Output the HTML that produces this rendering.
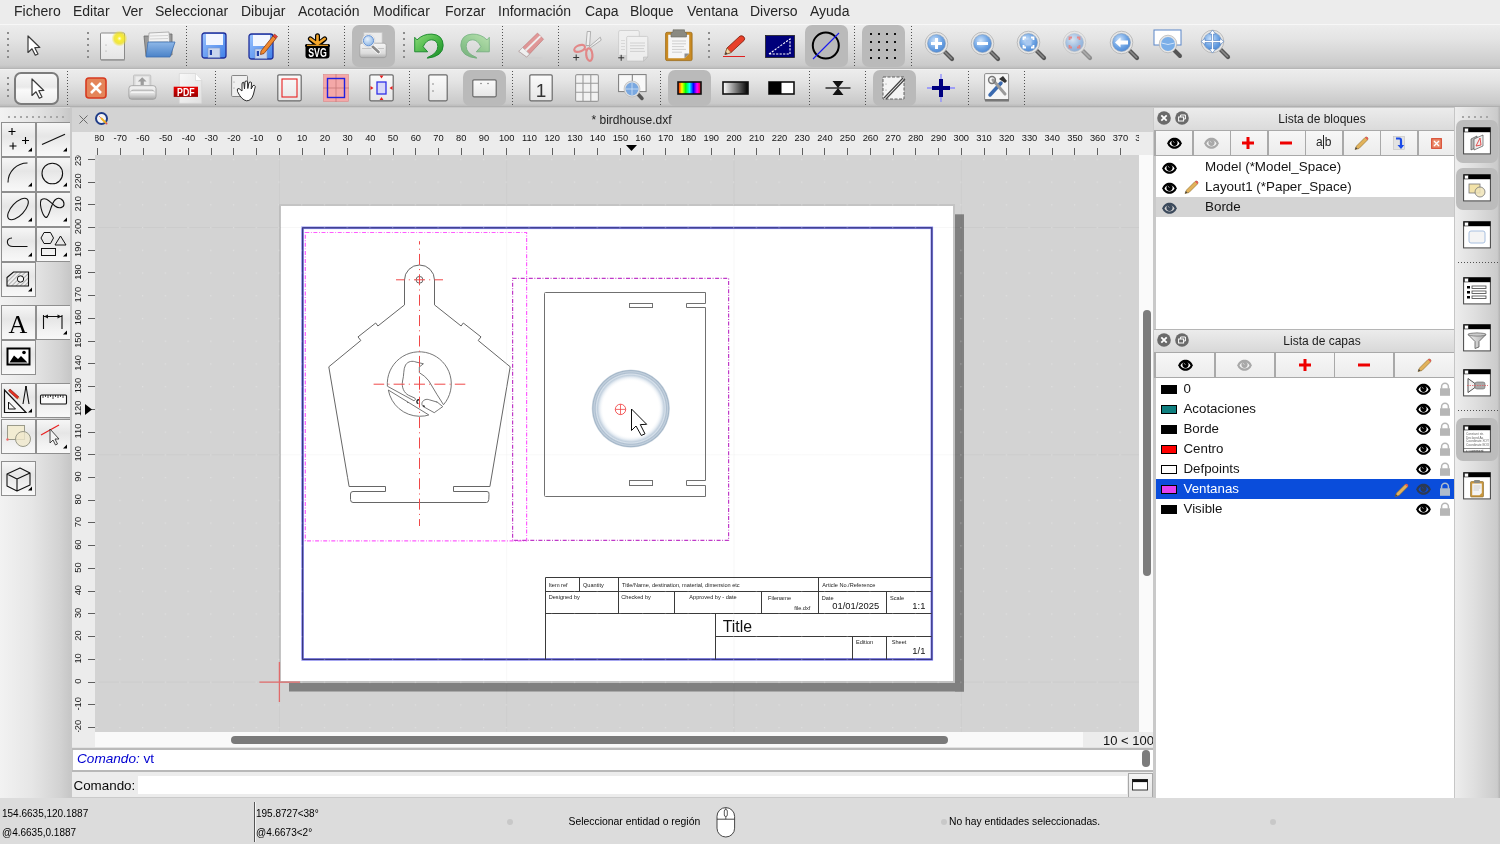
<!DOCTYPE html>
<html><head><meta charset="utf-8">
<style>
*{box-sizing:border-box;margin:0;padding:0}
html,body{width:1500px;height:844px;overflow:hidden;background:#ececec;font-family:"Liberation Sans",sans-serif;color:#262626}
body{will-change:transform}
.a{position:absolute}
#menu{left:0;top:0;width:1500px;height:24px;background:#ececec}
#menu span{position:absolute;top:3px;font-size:14px;line-height:17px;color:#262626}
.tb{left:0;width:1500px;background:linear-gradient(#ebebeb,#d5d5d5)}
.sep{position:absolute;width:1px;border-left:1px dotted #555}
.press{position:absolute;background:#c2c2c2;border-radius:6px}
svg{position:absolute;overflow:visible}
#left{left:0;top:107px;width:70px;height:691px;background:linear-gradient(90deg,#ececec 0%,#e2e2e2 50%,#c9c9c9 100%)}
.lb{position:absolute;width:35px;height:35px;border:1px solid #9b9b9b;background:linear-gradient(#fdfdfd,#e9e9e9 55%,#f3f3f3)}
#status{left:0;top:798px;width:1500px;height:46px;background:#dcdcdc}
#status span{position:absolute;font-size:10px;line-height:12px;color:#000}
.t{position:absolute;white-space:pre}
</style></head><body>
<div id="menu" class="a">
<span style="left:14px">Fichero</span>
<span style="left:73px">Editar</span>
<span style="left:122px">Ver</span>
<span style="left:155px">Seleccionar</span>
<span style="left:241px">Dibujar</span>
<span style="left:298px">Acotación</span>
<span style="left:373px">Modificar</span>
<span style="left:445px">Forzar</span>
<span style="left:498px">Información</span>
<span style="left:585px">Capa</span>
<span style="left:630px">Bloque</span>
<span style="left:687px">Ventana</span>
<span style="left:750px">Diverso</span>
<span style="left:810px">Ayuda</span>
</div>

<div class="a" style="left:0;top:24px;width:1500px;height:1px;background:#f7f7f7"></div>
<div class="a" style="left:0;top:25px;width:1500px;height:43px;background:linear-gradient(#ececec,#e5e5e5 30%,#cbcbcb 93%,#bebebe)"></div>
<div class="a" style="left:0;top:68px;width:1500px;height:1px;background:#b6b6b6"></div>
<div class="a" style="left:0;top:69px;width:1500px;height:1px;background:#f2f2f2"></div>
<div class="a" style="left:0;top:70px;width:1500px;height:36px;background:linear-gradient(#ececec,#e4e4e4 30%,#c9c9c9 93%,#bcbcbc)"></div>
<div class="a" style="left:0;top:106px;width:1500px;height:1px;background:#b0b0b0"></div>
<div class="a" style="left:7px;top:32px;width:2px;height:2px;background:#8c8c8c"></div>
<div class="a" style="left:7px;top:38px;width:2px;height:2px;background:#8c8c8c"></div>
<div class="a" style="left:7px;top:44px;width:2px;height:2px;background:#8c8c8c"></div>
<div class="a" style="left:7px;top:50px;width:2px;height:2px;background:#8c8c8c"></div>
<div class="a" style="left:7px;top:56px;width:2px;height:2px;background:#8c8c8c"></div>
<div class="a" style="left:87px;top:32px;width:2px;height:2px;background:#8c8c8c"></div>
<div class="a" style="left:87px;top:38px;width:2px;height:2px;background:#8c8c8c"></div>
<div class="a" style="left:87px;top:44px;width:2px;height:2px;background:#8c8c8c"></div>
<div class="a" style="left:87px;top:50px;width:2px;height:2px;background:#8c8c8c"></div>
<div class="a" style="left:87px;top:56px;width:2px;height:2px;background:#8c8c8c"></div>
<div class="a" style="left:403px;top:32px;width:2px;height:2px;background:#8c8c8c"></div>
<div class="a" style="left:403px;top:38px;width:2px;height:2px;background:#8c8c8c"></div>
<div class="a" style="left:403px;top:44px;width:2px;height:2px;background:#8c8c8c"></div>
<div class="a" style="left:403px;top:50px;width:2px;height:2px;background:#8c8c8c"></div>
<div class="a" style="left:403px;top:56px;width:2px;height:2px;background:#8c8c8c"></div>
<div class="a" style="left:708px;top:32px;width:2px;height:2px;background:#8c8c8c"></div>
<div class="a" style="left:708px;top:38px;width:2px;height:2px;background:#8c8c8c"></div>
<div class="a" style="left:708px;top:44px;width:2px;height:2px;background:#8c8c8c"></div>
<div class="a" style="left:708px;top:50px;width:2px;height:2px;background:#8c8c8c"></div>
<div class="a" style="left:708px;top:56px;width:2px;height:2px;background:#8c8c8c"></div>
<div class="a" style="left:186px;top:26px;width:1px;height:41px;background:repeating-linear-gradient(#505050 0 1px,transparent 1px 3px)"></div>
<div class="a" style="left:288px;top:26px;width:1px;height:41px;background:repeating-linear-gradient(#505050 0 1px,transparent 1px 3px)"></div>
<div class="a" style="left:344px;top:26px;width:1px;height:41px;background:repeating-linear-gradient(#505050 0 1px,transparent 1px 3px)"></div>
<div class="a" style="left:502px;top:26px;width:1px;height:41px;background:repeating-linear-gradient(#505050 0 1px,transparent 1px 3px)"></div>
<div class="a" style="left:558px;top:26px;width:1px;height:41px;background:repeating-linear-gradient(#505050 0 1px,transparent 1px 3px)"></div>
<div class="a" style="left:854px;top:26px;width:1px;height:41px;background:repeating-linear-gradient(#505050 0 1px,transparent 1px 3px)"></div>
<div class="a" style="left:911px;top:26px;width:1px;height:41px;background:repeating-linear-gradient(#505050 0 1px,transparent 1px 3px)"></div>
<div class="a" style="left:352px;top:25px;width:43px;height:42px;background:#bababa;border-radius:7px"></div>
<div class="a" style="left:805px;top:25px;width:43px;height:42px;background:#bababa;border-radius:7px"></div>
<div class="a" style="left:862px;top:25px;width:43px;height:42px;background:#bababa;border-radius:7px"></div>
<svg style="left:27px;top:35px" width="14" height="22" viewBox="0 0 14 22"><path d="M1 1 L1 17.5 L5 13.8 L8.3 20.2 L11 19 L7.8 12.7 L12.8 12.5 Z" fill="#fff" stroke="#3a3a3a" stroke-width="1.2" stroke-linejoin="round"/></svg>
<svg style="left:99px;top:31px" width="28" height="30" viewBox="0 0 28 30"><defs><linearGradient id="nd" x1="0" y1="0" x2="0" y2="1"><stop offset="0" stop-color="#fafafa"/><stop offset="1" stop-color="#e4e4e4"/></linearGradient><radialGradient id="ng"><stop offset="0" stop-color="#fffde0"/><stop offset="0.3" stop-color="#f8ee30"/><stop offset="0.65" stop-color="#eee020" stop-opacity="0.8"/><stop offset="1" stop-color="#eee020" stop-opacity="0"/></radialGradient></defs><rect x="1.5" y="2" width="24" height="27" rx="1" fill="url(#nd)" stroke="#8a8a8a" stroke-width="1"/><rect x="2" y="28" width="24" height="1.5" fill="#9a9a9a"/><circle cx="7" cy="14" r="0.5" fill="#888"/><circle cx="7" cy="20" r="0.5" fill="#888"/><circle cx="20.5" cy="7.5" r="8" fill="url(#ng)"/></svg>
<svg style="left:142px;top:31px" width="34" height="29" viewBox="0 0 34 29"><defs><linearGradient id="of" x1="0" y1="0" x2="0" y2="1"><stop offset="0" stop-color="#8fb8e8"/><stop offset="1" stop-color="#4a82c8"/></linearGradient></defs><path d="M2 5 L8 5 L9 3 L30 3 L30 24 L4 25 Z" fill="#9a9a9a" stroke="#6a6a6a" stroke-width="0.8"/><path d="M7 2 L27 1 L28 20 L6 21 Z" fill="#f4f4f4" stroke="#9a9a9a" stroke-width="0.7"/><path d="M8 5 L26 4.5 M8 8 L26 7.5 M8 11 L26 10.5" stroke="#bbb" stroke-width="0.6"/><path d="M6 11 L33 11 L28 26 L4 26 Z" fill="url(#of)" stroke="#3e6eb0" stroke-width="0.8"/></svg>
<svg style="left:201px;top:32px" width="27" height="28" viewBox="0 0 27 28"><defs><linearGradient id="sv" x1="0" y1="0" x2="1" y2="1"><stop offset="0" stop-color="#9cc4ff"/><stop offset="1" stop-color="#3f7fe8"/></linearGradient></defs><rect x="1" y="1" width="24" height="25" rx="2.5" fill="url(#sv)" stroke="#1f2f9a" stroke-width="1.3"/><rect x="5" y="2" width="17" height="11" fill="#f2f6ff"/><rect x="7" y="16" width="12" height="9.5" fill="#c9d6ee" stroke="#7f98c8" stroke-width="0.6"/><rect x="8.8" y="18" width="2.2" height="5" fill="#1f3fa8"/></svg>
<svg style="left:248px;top:31px" width="29" height="29" viewBox="0 0 29 29"><g transform="translate(0 2)"><defs><linearGradient id="sv2" x1="0" y1="0" x2="1" y2="1"><stop offset="0" stop-color="#9cc4ff"/><stop offset="1" stop-color="#3f7fe8"/></linearGradient></defs><rect x="1" y="1" width="24" height="25" rx="2.5" fill="url(#sv2)" stroke="#1f2f9a" stroke-width="1.3"/><rect x="5" y="2" width="17" height="11" fill="#f2f6ff"/><rect x="7" y="16" width="12" height="9.5" fill="#c9d6ee" stroke="#7f98c8" stroke-width="0.6"/><rect x="8.8" y="18" width="2.2" height="5" fill="#1f3fa8"/></g><path d="M13 20 L25 5 L28 7.5 L16 22.5 L12.5 23.5 Z" fill="#f08a30" stroke="#8a3a10" stroke-width="0.8"/><path d="M25 5 L26.5 3 L29.5 5.5 L28 7.5 Z" fill="#e84040" stroke="#8a3a10" stroke-width="0.6"/></svg>
<svg style="left:304px;top:33px" width="27" height="26" viewBox="0 0 27 26"><g stroke-linecap="round"><path d="M13.5 12 L13.5 2.8 M13.5 12 L6.3 5.8 M13.5 12 L20.7 5.8" stroke="#000" stroke-width="5"/><path d="M2.5 12.5 L24.5 12.5" stroke="#000" stroke-width="3"/><path d="M13.5 11 L13.5 2.8 M13.5 11 L6.3 5.8 M13.5 11 L20.7 5.8" stroke="#f4a62a" stroke-width="2.6"/></g><path d="M1.5 12 L25.5 12 L25.5 22.5 Q25.5 25.5 22.5 25.5 L4.5 25.5 Q1.5 25.5 1.5 22.5 Z" fill="#000"/><path d="M3 12.3 L24 12.3" stroke="#f4a62a" stroke-width="1.2"/><text x="13.5" y="23.8" font-family="Liberation Sans" font-weight="bold" font-size="12" fill="#fff" text-anchor="middle" textLength="18.5" lengthAdjust="spacingAndGlyphs">SVG</text></svg>
<svg style="left:359px;top:32px" width="29" height="28" viewBox="0 0 29 28"><defs><linearGradient id="pp" x1="0" y1="0" x2="0" y2="1"><stop offset="0" stop-color="#f6f6f6"/><stop offset="0.7" stop-color="#dcdcdc"/><stop offset="1" stop-color="#b0b0b0"/></linearGradient><radialGradient id="ppl" cx="0.4" cy="0.35" r="0.7"><stop offset="0" stop-color="#e8f2fc"/><stop offset="1" stop-color="#8ab4e4"/></radialGradient></defs><rect x="4.9" y="0.6" width="18.2" height="12.3" fill="#ececec" stroke="#c8c8c8" stroke-width="0.7"/><path d="M0.8 13.5 Q0.8 11.2 3 11.2 L25 11.2 Q27.2 11.2 27.2 13.5 L27.2 23.5 Q27.2 25.6 25 25.6 L3 25.6 Q0.8 25.6 0.8 23.5 Z" fill="url(#pp)" stroke="#9a9a9a" stroke-width="0.7"/><path d="M3 16.5 L25 16.5" stroke="#bbb" stroke-width="0.8"/><path d="M13.5 14.5 L19.5 20" stroke="#fff" stroke-width="4.2" stroke-linecap="round"/><path d="M13.5 14.5 L19.5 20" stroke="#8a8a8a" stroke-width="2.6" stroke-linecap="round"/><circle cx="9.5" cy="8.7" r="6.4" fill="#fafafa" stroke="#c8c8c8" stroke-width="0.6"/><circle cx="9.5" cy="8.7" r="5.1" fill="url(#ppl)" stroke="#5a8ad0" stroke-width="0.9"/></svg>
<svg style="left:414px;top:33px" width="30" height="27" viewBox="0 0 30 27"><defs><linearGradient id="ug" x1="0" y1="0" x2="1" y2="1"><stop offset="0" stop-color="#8edc7a"/><stop offset="0.6" stop-color="#3fb040"/><stop offset="1" stop-color="#1a8a28"/></linearGradient></defs><path d="M0.7 4.3 L3 6.9 Q9 0.8 17.9 1.1 Q29 1.8 29.2 12.5 Q29 23.5 13.3 25.2 L13.6 24.4 Q23.6 20.5 23.8 13.5 Q23.6 6.8 17.2 6.8 Q12.3 7 9.1 13.7 L13.7 18.8 L0.7 18.8 Z" fill="url(#ug)" stroke="#16862a" stroke-width="0.9" stroke-linejoin="round"/></svg>
<svg style="left:460px;top:33px" width="30" height="27" viewBox="0 0 30 27"><g opacity="0.5" transform="translate(30 0) scale(-1 1)"><defs><linearGradient id="rg" x1="0" y1="0" x2="1" y2="1"><stop offset="0" stop-color="#8edc7a"/><stop offset="0.6" stop-color="#3fb040"/><stop offset="1" stop-color="#1a8a28"/></linearGradient></defs><path d="M0.7 4.3 L3 6.9 Q9 0.8 17.9 1.1 Q29 1.8 29.2 12.5 Q29 23.5 13.3 25.2 L13.6 24.4 Q23.6 20.5 23.8 13.5 Q23.6 6.8 17.2 6.8 Q12.3 7 9.1 13.7 L13.7 18.8 L0.7 18.8 Z" fill="url(#rg)" stroke="#16862a" stroke-width="0.9" stroke-linejoin="round"/></g></svg>
<svg style="left:517px;top:32px" width="28" height="28" viewBox="0 0 28 28"><g opacity="0.7"><ellipse cx="16" cy="26" rx="10" ry="1.3" fill="#cfcfcf"/><path d="M1.8 19.3 L20.5 1.1 L26.5 7.2 L9.7 25 Z" fill="#e07878" stroke="#b05050" stroke-width="0.7"/><path d="M1.8 19.3 L5.6 15.6 L12.6 22 L9.7 25 Z" fill="#fafafa" stroke="#999" stroke-width="0.7"/><path d="M8.5 18.8 L23.4 4.1" stroke="#f4f4f4" stroke-width="2"/></g></svg>
<svg style="left:572px;top:31px" width="30" height="30" viewBox="0 0 30 30"><g opacity="0.85"><path d="M14 14.5 L15.2 0.5 L18.6 0.5 L17.6 14.5 Z" fill="#f2f2f2" stroke="#8a8a8a" stroke-width="0.7"/><path d="M17.2 15.8 L28.3 6.2 L29.2 9.2 L18.6 16.6 Z" fill="#f2f2f2" stroke="#8a8a8a" stroke-width="0.7"/><ellipse cx="7.6" cy="17.4" rx="5.6" ry="3.1" transform="rotate(-22 7.6 17.4)" fill="none" stroke="#e47a7a" stroke-width="2.2"/><ellipse cx="17.3" cy="23.6" rx="3.1" ry="6.3" transform="rotate(-6 17.3 23.6)" fill="none" stroke="#e47a7a" stroke-width="2.2"/><path d="M12.5 18.5 L15.5 19" stroke="#e47a7a" stroke-width="2"/></g><path d="M1.2 26.5 L7.2 26.5 M4.2 23.5 L4.2 29.5" stroke="#333" stroke-width="1"/></svg>
<svg style="left:617px;top:30px" width="32" height="32" viewBox="0 0 32 32"><g opacity="0.8"><rect x="1.6" y="0.5" width="20.7" height="25.2" rx="1.5" fill="#f2f2f2" stroke="#c4c4c4" stroke-width="0.8"/><path d="M4 10.5 L8 10.5 M4 13.5 L8 13.5 M4 16.5 L8 16.5 M4 19.5 L8 19.5" stroke="#cfcfcf" stroke-width="0.8"/><path d="M11.2 6.4 L29.8 6.4 Q30.8 6.4 30.8 7.4 L30.8 27 L26.5 31.1 L10.7 31.1 Q9.7 31.1 9.7 30.1 L9.7 7.4 Q9.7 6.4 11.2 6.4 Z" fill="#f4f4f4" stroke="#c0c0c0" stroke-width="0.8"/><path d="M13 13 L28 13 M13 15.8 L28 15.8 M13 18.6 L27 18.6 M13 21.4 L28 21.4" stroke="#c8c8c8" stroke-width="0.9"/><path d="M26.5 31.1 L26.5 27 L30.8 27 Z" fill="#d8d8d8" stroke="#aaa" stroke-width="0.5"/></g><path d="M1.2 27.8 L7.2 27.8 M4.2 24.8 L4.2 30.8" stroke="#333" stroke-width="1"/></svg>
<svg style="left:665px;top:29px" width="28" height="32" viewBox="0 0 28 32"><rect x="0.6" y="3.3" width="26.5" height="28.3" rx="1.5" fill="#c98a22" stroke="#9a6a18" stroke-width="0.8"/><path d="M3.2 5.8 L24.2 5.8 L24.2 24.5 L19.5 29.2 L3.2 29.2 Z" fill="#f6f6f6"/><path d="M19.5 29.2 L24.2 24.5 L19.5 24.5 Z" fill="#8e8e8e"/><path d="M8 0.8 L19.5 0.8 L19.5 3 L21.5 4 L21.5 8 L6 8 L6 4 L8 3 Z" fill="#8a8a82" stroke="#6a6a62" stroke-width="0.6"/><path d="M7 12 L21 12 M7 14.8 L21 14.8 M7 17.6 L19 17.6 M7 20.4 L21 20.4 M7 23.2 L17 23.2" stroke="#c4c4c4" stroke-width="0.8"/></svg>
<svg style="left:722px;top:34px" width="24" height="24" viewBox="0 0 24 24"><path d="M1 22.5 L23 22.5" stroke="#e02020" stroke-width="1"/><path d="M3 20.5 L5 14 L18 2 Q20 1 22 3 Q23.5 5 22 6.5 L9 18.5 Z" fill="#e8402a" stroke="#7a1a0a" stroke-width="0.8"/><path d="M3 20.5 L5 14 L9 18.5 Z" fill="#f4d8a8" stroke="#7a5a2a" stroke-width="0.6"/><path d="M3 20.5 L3.8 18 L5.5 19.5Z" fill="#333"/></svg>
<svg style="left:765px;top:35px" width="30" height="23" viewBox="0 0 30 23"><rect x="0.5" y="0.5" width="29" height="22" fill="#00007a" stroke="#222" stroke-width="0.8"/><path d="M4 19 L25 4 L25 19 Z" fill="none" stroke="#fff" stroke-width="1.1" stroke-dasharray="2.2 1.3"/></svg>
<svg style="left:811px;top:31px" width="30" height="30" viewBox="0 0 30 30"><circle cx="14.8" cy="14.6" r="13" fill="none" stroke="#000" stroke-width="2"/><path d="M2 28 L28 2" stroke="#1818f0" stroke-width="1.1"/></svg>
<svg style="left:870px;top:33px" width="26" height="26" viewBox="0 0 26 26"><rect x="0" y="0" width="2" height="2" fill="#111"/><rect x="0" y="8" width="2" height="2" fill="#111"/><rect x="0" y="16" width="2" height="2" fill="#111"/><rect x="0" y="24" width="2" height="2" fill="#111"/><rect x="8" y="0" width="2" height="2" fill="#111"/><rect x="8" y="8" width="2" height="2" fill="#111"/><rect x="8" y="16" width="2" height="2" fill="#111"/><rect x="8" y="24" width="2" height="2" fill="#111"/><rect x="16" y="0" width="2" height="2" fill="#111"/><rect x="16" y="8" width="2" height="2" fill="#111"/><rect x="16" y="16" width="2" height="2" fill="#111"/><rect x="16" y="24" width="2" height="2" fill="#111"/><rect x="24" y="0" width="2" height="2" fill="#111"/><rect x="24" y="8" width="2" height="2" fill="#111"/><rect x="24" y="16" width="2" height="2" fill="#111"/><rect x="24" y="24" width="2" height="2" fill="#111"/></svg>
<svg style="left:924px;top:31px" width="32" height="31" viewBox="0 0 32 31"><defs><radialGradient id="mgl924" cx="0.4" cy="0.35" r="0.7"><stop offset="0" stop-color="#cfe4fb"/><stop offset="0.6" stop-color="#6ea4e4"/><stop offset="1" stop-color="#4b86d2"/></radialGradient></defs><g><path d="M20 20 L28 28" stroke="#555" stroke-width="4.2" stroke-linecap="round"/><path d="M21 21 L27.5 27.5" stroke="#8a8a8a" stroke-width="1.6" stroke-linecap="round"/><circle cx="12.5" cy="12.5" r="11.3" fill="#e6e6e6" stroke="#b0b0b0" stroke-width="0.8"/><circle cx="12.5" cy="12.5" r="9" fill="url(#mgl924)" stroke="#8aa0b8" stroke-width="0.6"/><path d="M7 12.5 L18 12.5 M12.5 7 L12.5 18" stroke="#fff" stroke-width="3"/></g></svg>
<svg style="left:970px;top:31px" width="32" height="31" viewBox="0 0 32 31"><defs><radialGradient id="mgl970" cx="0.4" cy="0.35" r="0.7"><stop offset="0" stop-color="#cfe4fb"/><stop offset="0.6" stop-color="#6ea4e4"/><stop offset="1" stop-color="#4b86d2"/></radialGradient></defs><g><path d="M20 20 L28 28" stroke="#555" stroke-width="4.2" stroke-linecap="round"/><path d="M21 21 L27.5 27.5" stroke="#8a8a8a" stroke-width="1.6" stroke-linecap="round"/><circle cx="12.5" cy="12.5" r="11.3" fill="#e6e6e6" stroke="#b0b0b0" stroke-width="0.8"/><circle cx="12.5" cy="12.5" r="9" fill="url(#mgl970)" stroke="#8aa0b8" stroke-width="0.6"/><path d="M7 12.5 L18 12.5" stroke="#fff" stroke-width="3"/></g></svg>
<svg style="left:1016px;top:30px" width="32" height="31" viewBox="0 0 32 31"><defs><radialGradient id="mgl1016" cx="0.4" cy="0.35" r="0.7"><stop offset="0" stop-color="#cfe4fb"/><stop offset="0.6" stop-color="#6ea4e4"/><stop offset="1" stop-color="#4b86d2"/></radialGradient></defs><g><path d="M20 20 L28 28" stroke="#555" stroke-width="4.2" stroke-linecap="round"/><path d="M21 21 L27.5 27.5" stroke="#8a8a8a" stroke-width="1.6" stroke-linecap="round"/><circle cx="12.5" cy="12.5" r="11.3" fill="#e6e6e6" stroke="#b0b0b0" stroke-width="0.8"/><circle cx="12.5" cy="12.5" r="9" fill="url(#mgl1016)" stroke="#8aa0b8" stroke-width="0.6"/><path d="M7.5 10 L7.5 7.5 L10 7.5 M15 7.5 L17.5 7.5 L17.5 10 M17.5 15 L17.5 17.5 L15 17.5 M10 17.5 L7.5 17.5 L7.5 15" fill="none" stroke="#fff" stroke-width="1.8"/><rect x="9.5" y="9.5" width="6" height="6" fill="#a8c8f0"/></g></svg>
<svg style="left:1062px;top:30px" width="32" height="31" viewBox="0 0 32 31"><defs><radialGradient id="mgl1062" cx="0.4" cy="0.35" r="0.7"><stop offset="0" stop-color="#cfe4fb"/><stop offset="0.6" stop-color="#6ea4e4"/><stop offset="1" stop-color="#4b86d2"/></radialGradient></defs><g opacity="0.55"><path d="M20 20 L28 28" stroke="#555" stroke-width="4.2" stroke-linecap="round"/><path d="M21 21 L27.5 27.5" stroke="#8a8a8a" stroke-width="1.6" stroke-linecap="round"/><circle cx="12.5" cy="12.5" r="11.3" fill="#e6e6e6" stroke="#b0b0b0" stroke-width="0.8"/><circle cx="12.5" cy="12.5" r="9" fill="url(#mgl1062)" stroke="#8aa0b8" stroke-width="0.6"/><path d="M7.5 10 L7.5 7.5 L10 7.5 M15 7.5 L17.5 7.5 L17.5 10 M17.5 15 L17.5 17.5 L15 17.5 M10 17.5 L7.5 17.5 L7.5 15" fill="none" stroke="#e84040" stroke-width="1.8"/></g></svg>
<svg style="left:1109px;top:30px" width="32" height="31" viewBox="0 0 32 31"><defs><radialGradient id="mgl1109" cx="0.4" cy="0.35" r="0.7"><stop offset="0" stop-color="#cfe4fb"/><stop offset="0.6" stop-color="#6ea4e4"/><stop offset="1" stop-color="#4b86d2"/></radialGradient></defs><g><path d="M20 20 L28 28" stroke="#555" stroke-width="4.2" stroke-linecap="round"/><path d="M21 21 L27.5 27.5" stroke="#8a8a8a" stroke-width="1.6" stroke-linecap="round"/><circle cx="12.5" cy="12.5" r="11.3" fill="#e6e6e6" stroke="#b0b0b0" stroke-width="0.8"/><circle cx="12.5" cy="12.5" r="9" fill="url(#mgl1109)" stroke="#8aa0b8" stroke-width="0.6"/><path d="M6 12.5 L11.5 7.5 L11.5 10.5 L19 10.5 L19 14.5 L11.5 14.5 L11.5 17.5 Z" fill="#fff"/></g></svg>
<svg style="left:1153px;top:29px" width="31" height="31" viewBox="0 0 31 31"><rect x="1" y="1" width="27" height="15" fill="#fff" stroke="#5a86c8" stroke-width="1"/><path d="M20 20 L27 27" stroke="#555" stroke-width="4" stroke-linecap="round"/><circle cx="15" cy="15" r="8.8" fill="#e6e6e6" stroke="#b0b0b0" stroke-width="0.7"/><circle cx="15" cy="15" r="7" fill="#7aaee8"/><path d="M8.5 14 Q15 17 21.5 14" stroke="#cfe3fa" stroke-width="1" fill="none"/></svg>
<svg style="left:1200px;top:29px" width="32" height="32" viewBox="0 0 32 32"><defs><radialGradient id="mgl1200" cx="0.4" cy="0.35" r="0.7"><stop offset="0" stop-color="#cfe4fb"/><stop offset="0.6" stop-color="#6ea4e4"/><stop offset="1" stop-color="#4b86d2"/></radialGradient></defs><g><path d="M20 20 L28 28" stroke="#555" stroke-width="4.2" stroke-linecap="round"/><path d="M21 21 L27.5 27.5" stroke="#8a8a8a" stroke-width="1.6" stroke-linecap="round"/><circle cx="12.5" cy="12.5" r="11.3" fill="#e6e6e6" stroke="#b0b0b0" stroke-width="0.8"/><circle cx="12.5" cy="12.5" r="9" fill="url(#mgl1200)" stroke="#8aa0b8" stroke-width="0.6"/><path d="M12.5 1 L15.5 5 L13.5 5 L13.5 11.5 L20 11.5 L20 9.5 L24 12.5 L20 15.5 L20 13.5 L13.5 13.5 L13.5 20 L15.5 20 L12.5 24 L9.5 20 L11.5 20 L11.5 13.5 L5 13.5 L5 15.5 L1 12.5 L5 9.5 L5 11.5 L11.5 11.5 L11.5 5 L9.5 5 Z" fill="#fff" stroke="#4a7ac0" stroke-width="0.6"/></g></svg>
<div class="a" style="left:7px;top:77px;width:2px;height:2px;background:#8c8c8c"></div>
<div class="a" style="left:7px;top:83px;width:2px;height:2px;background:#8c8c8c"></div>
<div class="a" style="left:7px;top:89px;width:2px;height:2px;background:#8c8c8c"></div>
<div class="a" style="left:7px;top:95px;width:2px;height:2px;background:#8c8c8c"></div>
<div class="a" style="left:67px;top:71px;width:1px;height:35px;background:repeating-linear-gradient(#505050 0 1px,transparent 1px 3px)"></div>
<div class="a" style="left:215px;top:71px;width:1px;height:35px;background:repeating-linear-gradient(#505050 0 1px,transparent 1px 3px)"></div>
<div class="a" style="left:409px;top:71px;width:1px;height:35px;background:repeating-linear-gradient(#505050 0 1px,transparent 1px 3px)"></div>
<div class="a" style="left:512px;top:71px;width:1px;height:35px;background:repeating-linear-gradient(#505050 0 1px,transparent 1px 3px)"></div>
<div class="a" style="left:660px;top:71px;width:1px;height:35px;background:repeating-linear-gradient(#505050 0 1px,transparent 1px 3px)"></div>
<div class="a" style="left:809px;top:71px;width:1px;height:35px;background:repeating-linear-gradient(#505050 0 1px,transparent 1px 3px)"></div>
<div class="a" style="left:865px;top:71px;width:1px;height:35px;background:repeating-linear-gradient(#505050 0 1px,transparent 1px 3px)"></div>
<div class="a" style="left:968px;top:71px;width:1px;height:35px;background:repeating-linear-gradient(#505050 0 1px,transparent 1px 3px)"></div>
<div class="a" style="left:1024px;top:71px;width:1px;height:35px;background:repeating-linear-gradient(#505050 0 1px,transparent 1px 3px)"></div>
<div class="a" style="left:463px;top:70px;width:43px;height:36px;background:#bababa;border-radius:7px"></div>
<div class="a" style="left:668px;top:70px;width:43px;height:36px;background:#bababa;border-radius:7px"></div>
<div class="a" style="left:873px;top:70px;width:43px;height:36px;background:#bababa;border-radius:7px"></div>
<div class="a" style="left:14px;top:72px;width:45px;height:33px;border:2px solid #7c7c7c;border-radius:7px;background:linear-gradient(#f7f7f7,#e9e9e9 45%,#fafafa 55%,#ececec)"></div>
<svg style="left:31px;top:78px" width="14" height="22" viewBox="0 0 14 22"><path d="M1 1 L1 17.5 L5 13.8 L8.3 20.2 L11 19 L7.8 12.7 L12.8 12.5 Z" fill="#fff" stroke="#3a3a3a" stroke-width="1.2" stroke-linejoin="round"/></svg>
<svg style="left:85px;top:77px" width="22" height="22" viewBox="0 0 22 22"><rect x="1" y="1" width="20" height="20" rx="3" fill="#e4855a" stroke="#d63a20" stroke-width="1.6"/><path d="M6 6 L16 16 M16 6 L6 16" stroke="#fff" stroke-width="2.6"/></svg>
<svg style="left:128px;top:74px" width="29" height="27" viewBox="0 0 29 27"><defs><linearGradient id="pr" x1="0" y1="0" x2="0" y2="1"><stop offset="0" stop-color="#f4f4f4"/><stop offset="0.6" stop-color="#dedede"/><stop offset="1" stop-color="#a8a8a8"/></linearGradient></defs><rect x="5.5" y="1" width="17.3" height="12.5" rx="1" fill="#d8d8d8" stroke="#bdbdbd" stroke-width="0.8"/><rect x="7.5" y="2.5" width="13.3" height="9" fill="#ececec"/><path d="M14.2 3.2 L18.6 7.6 L15.8 7.6 L15.8 11 L12.6 11 L12.6 7.6 L9.8 7.6 Z" fill="#9c9c9c"/><path d="M0.9 14.5 Q0.9 11.7 3.7 11.7 L25.2 11.7 Q28 11.7 28 14.5 L28 22.5 Q28 25.3 25.2 25.3 L3.7 25.3 Q0.9 25.3 0.9 22.5 Z" fill="url(#pr)" stroke="#9a9a9a" stroke-width="0.8"/><path d="M2.8 17.5 Q3.5 16.2 5 16.2 L24 16.2 Q25.5 16.2 26 17.5" fill="none" stroke="#9a9a9a" stroke-width="0.8"/><path d="M3 18.3 L26 18.3" stroke="#fff" stroke-width="0.8"/></svg>
<svg style="left:173px;top:73px" width="30" height="31" viewBox="0 0 30 31"><defs><linearGradient id="pdfg" x1="0" y1="0" x2="0" y2="1"><stop offset="0" stop-color="#e80000"/><stop offset="1" stop-color="#980000"/></linearGradient><linearGradient id="pdfd" x1="0" y1="0" x2="1" y2="1"><stop offset="0" stop-color="#f8f8f8"/><stop offset="1" stop-color="#e0e0e0"/></linearGradient></defs><path d="M6.3 0.5 L22.5 0.5 L28.7 7.5 L28.7 30.3 L6.3 30.3 Z" fill="url(#pdfd)" stroke="#d4d4d4" stroke-width="0.7"/><path d="M22.5 0.5 L22.5 7.5 L28.7 7.5" fill="#fff" stroke="#d0d0d0" stroke-width="0.6"/><rect x="0.7" y="13.7" width="24.3" height="10.2" fill="url(#pdfg)"/><text x="12.8" y="22.7" font-family="Liberation Sans" font-weight="bold" font-size="10.6" fill="#fff" text-anchor="middle" textLength="17.5" lengthAdjust="spacingAndGlyphs">PDF</text></svg>
<svg style="left:230px;top:74px" width="28" height="28" viewBox="0 0 28 28"><rect x="1.6" y="1.5" width="15.9" height="21" rx="1" fill="#efefef" stroke="#7a7a7a" stroke-width="0.9"/><circle cx="4" cy="8" r="0.5" fill="#777"/><circle cx="4" cy="14" r="0.5" fill="#777"/><path d="M7.5 17.5 Q6.5 14 9 14.5 L12 17 L12 10 Q12 8 13.8 8.3 L14.5 15 L15 7.5 Q16.2 6.5 17.5 7.5 L17.8 14.5 L19 8.5 Q20.3 7.5 21.5 8.5 L21.2 15 L23 11.5 Q24.8 10.8 25.3 12.5 L23.5 20 Q21.5 27 16.5 26.8 Q11.5 26 7.5 17.5 Z" fill="#fff" stroke="#2a2a2a" stroke-width="1"/></svg>
<svg style="left:277px;top:74px" width="25" height="28" viewBox="0 0 25 28"><defs><linearGradient id="pg277" x1="0" y1="0" x2="0" y2="1"><stop offset="0" stop-color="#fbfbfb"/><stop offset="1" stop-color="#e6e6e6"/></linearGradient></defs><rect x="0.8" y="0.8" width="23.4" height="26" rx="1.2" fill="url(#pg277)" stroke="#6a6a6a" stroke-width="1.2"/><rect x="5" y="5" width="15" height="18" fill="none" stroke="#e82020" stroke-width="1.1"/></svg>
<svg style="left:323px;top:74px" width="26" height="28" viewBox="0 0 26 28"><rect x="0.5" y="0.5" width="25" height="27" fill="#f4a8a8" stroke="#d88" stroke-width="0.6"/><path d="M13 0 L13 28 M0 14 L26 14" stroke="#c87878" stroke-width="0.8"/><rect x="4.5" y="4.5" width="17" height="19" fill="none" stroke="#2020e0" stroke-width="1.4"/></svg>
<svg style="left:369px;top:74px" width="25" height="28" viewBox="0 0 25 28"><defs><linearGradient id="pg369" x1="0" y1="0" x2="0" y2="1"><stop offset="0" stop-color="#fbfbfb"/><stop offset="1" stop-color="#e6e6e6"/></linearGradient></defs><rect x="0.8" y="0.8" width="23.4" height="26" rx="1.2" fill="url(#pg369)" stroke="#6a6a6a" stroke-width="1.2"/><rect x="8" y="8" width="9" height="12" fill="#d8d8f8" stroke="#3030e8" stroke-width="1.3"/><path d="M10.5 1.5 L14.5 1.5 L12.5 4.5Z M10.5 26 L14.5 26 L12.5 23Z M1.5 12 L1.5 16 L4.5 14Z M23.5 12 L23.5 16 L20.5 14Z" fill="#e82020"/></svg>
<svg style="left:428px;top:74px" width="20" height="28" viewBox="0 0 20 28"><defs><linearGradient id="pg428" x1="0" y1="0" x2="0" y2="1"><stop offset="0" stop-color="#fbfbfb"/><stop offset="1" stop-color="#e6e6e6"/></linearGradient></defs><rect x="0.8" y="0.8" width="18.4" height="26" rx="1.2" fill="url(#pg428)" stroke="#6a6a6a" stroke-width="1.2"/><circle cx="5" cy="10" r="0.7" fill="#666"/><circle cx="5" cy="17" r="0.7" fill="#666"/></svg>
<svg style="left:472px;top:79px" width="25" height="19" viewBox="0 0 25 19"><defs><linearGradient id="pg472" x1="0" y1="0" x2="0" y2="1"><stop offset="0" stop-color="#fbfbfb"/><stop offset="1" stop-color="#e6e6e6"/></linearGradient></defs><rect x="0.8" y="0.8" width="23.4" height="17" rx="1.2" fill="url(#pg472)" stroke="#6a6a6a" stroke-width="1.2"/><circle cx="9" cy="4.5" r="0.7" fill="#666"/><circle cx="16" cy="4.5" r="0.7" fill="#666"/></svg>
<svg style="left:529px;top:74px" width="24" height="28" viewBox="0 0 24 28"><defs><linearGradient id="pg529" x1="0" y1="0" x2="0" y2="1"><stop offset="0" stop-color="#fbfbfb"/><stop offset="1" stop-color="#e6e6e6"/></linearGradient></defs><rect x="0.8" y="0.8" width="22.4" height="26" rx="1.2" fill="url(#pg529)" stroke="#6a6a6a" stroke-width="1.2"/><text x="12" y="22.5" font-family="Liberation Sans" font-size="19" fill="#333" text-anchor="middle">1</text></svg>
<svg style="left:575px;top:74px" width="24" height="28" viewBox="0 0 24 28"><rect x="0.6" y="0.6" width="22.8" height="26.8" rx="1.5" fill="#f2f2f2" stroke="#9a9a9a" stroke-width="1.1"/><path d="M8 0 L8 28 M15.8 0 L15.8 28 M0 9.3 L24 9.3 M0 18.3 L24 18.3" stroke="#9a9a9a" stroke-width="1.1"/></svg>
<svg style="left:618px;top:74px" width="30" height="28" viewBox="0 0 30 28"><rect x="0.6" y="0.6" width="27.5" height="17" fill="#f8f8f8" stroke="#7a7a7a" stroke-width="1"/><path d="M14.3 0.6 L14.3 17.6" stroke="#7a7a7a" stroke-width="1"/><path d="M18 18 L24 24.5" stroke="#555" stroke-width="3.5" stroke-linecap="round"/><circle cx="14" cy="15" r="8" fill="#e0e0e0" stroke="#b0b0b0" stroke-width="0.6"/><circle cx="14" cy="15" r="6.5" fill="#7aa8e0"/><path d="M8 15 L20 15 M14 9 L14 21" stroke="#cfe2f8" stroke-width="0.8"/></svg>
<svg style="left:677px;top:81px" width="25" height="14" viewBox="0 0 25 14"><defs><linearGradient id="rb"><stop offset="0" stop-color="#ff0000"/><stop offset="0.17" stop-color="#ffff00"/><stop offset="0.33" stop-color="#00ff00"/><stop offset="0.5" stop-color="#00ffff"/><stop offset="0.67" stop-color="#0000ff"/><stop offset="0.83" stop-color="#ff00ff"/><stop offset="1" stop-color="#ff0000"/></linearGradient></defs><rect x="1" y="1" width="23" height="12" fill="url(#rb)" stroke="#111" stroke-width="1.6"/></svg>
<svg style="left:722px;top:81px" width="27" height="14" viewBox="0 0 27 14"><defs><linearGradient id="gg"><stop offset="0" stop-color="#fff"/><stop offset="1" stop-color="#000"/></linearGradient></defs><rect x="1" y="1" width="25" height="12" fill="url(#gg)" stroke="#111" stroke-width="1.6"/></svg>
<svg style="left:768px;top:81px" width="27" height="14" viewBox="0 0 27 14"><rect x="1" y="1" width="25" height="12" fill="#fff" stroke="#111" stroke-width="1.6"/><rect x="1" y="1" width="12.5" height="12" fill="#000"/></svg>
<svg style="left:825px;top:80px" width="26" height="16" viewBox="0 0 26 16"><path d="M0.5 8 L25.5 8" stroke="#111" stroke-width="1.3"/><path d="M7.5 1 L18.5 1 L13 8 L18.5 15 L7.5 15 L13 8 Z" fill="#111"/></svg>
<svg style="left:882px;top:76px" width="24" height="24" viewBox="0 0 24 24"><rect x="1" y="1" width="21" height="22" fill="#f4f4f4" stroke="#555" stroke-width="0.9" stroke-dasharray="3 1.5"/><path d="M2 22 L21 2 M4 23 L23 3" stroke="#444" stroke-width="1.2"/><circle cx="4" cy="8" r="0.5" fill="#777"/><circle cx="4" cy="14" r="0.5" fill="#777"/></svg>
<svg style="left:927px;top:74px" width="28" height="28" viewBox="0 0 28 28"><path d="M0 14 L28 14 M14 0 L14 28" stroke="#8a8aff" stroke-width="1.3"/><path d="M5 14 L23 14 M14 5 L14 23" stroke="#000080" stroke-width="4"/></svg>
<svg style="left:984px;top:73px" width="26" height="29" viewBox="0 0 26 29"><rect x="0.6" y="0.6" width="24" height="27" rx="1.2" fill="#f6f6f6" stroke="#8a8a8a" stroke-width="1"/><rect x="1" y="26" width="24" height="2.5" fill="#777"/><path d="M6 22 L17 10" stroke="#3a6ab0" stroke-width="3.5" stroke-linecap="round"/><path d="M9 7 L21 21" stroke="#9a9a9a" stroke-width="3" stroke-linecap="round"/><circle cx="8" cy="7" r="3.4" fill="none" stroke="#777" stroke-width="1.5"/><path d="M15 6 L19 3 L23 8 L21 10 Z" fill="#333"/></svg>
<div class="a" style="left:0;top:107px;width:71px;height:691px;background:linear-gradient(90deg,#f2f2f2 0%,#e6e6e6 45%,#d2d2d2 85%,#c6c6c6 100%)"></div>
<div class="a" style="left:0;top:107px;width:71px;height:1px;background:#d8d8d8"></div>
<div class="a" style="left:8px;top:116px;width:2px;height:2px;background:#a6a6a6"></div>
<div class="a" style="left:14px;top:116px;width:2px;height:2px;background:#a6a6a6"></div>
<div class="a" style="left:20px;top:116px;width:2px;height:2px;background:#a6a6a6"></div>
<div class="a" style="left:26px;top:116px;width:2px;height:2px;background:#a6a6a6"></div>
<div class="a" style="left:32px;top:116px;width:2px;height:2px;background:#a6a6a6"></div>
<div class="a" style="left:38px;top:116px;width:2px;height:2px;background:#a6a6a6"></div>
<div class="a" style="left:44px;top:116px;width:2px;height:2px;background:#a6a6a6"></div>
<div class="a" style="left:50px;top:116px;width:2px;height:2px;background:#a6a6a6"></div>
<div class="a" style="left:56px;top:116px;width:2px;height:2px;background:#a6a6a6"></div>
<div class="a" style="left:62px;top:116px;width:2px;height:2px;background:#a6a6a6"></div>
<div class="a" style="left:1px;top:122px;width:35px;height:35px;border:1px solid #8f8f8f;background:linear-gradient(#f6f6f6,#e6e6e6 40%,#f2f2f2 75%,#f8f8f8)"></div>
<svg style="left:1px;top:122px" width="35" height="35" viewBox="0 0 35 35"><path d="M7.5 9.5 L14.5 9.5 M11 6 L11 13 M21 18.5 L28 18.5 M24.5 15 L24.5 22 M8.5 24 L15.5 24 M12 20.5 L12 27.5" stroke="#000" stroke-width="1.1"/><path d="M27 29.5 L31 29.5 L31 25.5 Z" fill="#000"/></svg>
<div class="a" style="left:36px;top:122px;width:35px;height:35px;border:1px solid #8f8f8f;background:linear-gradient(#f6f6f6,#e6e6e6 40%,#f2f2f2 75%,#f8f8f8)"></div>
<svg style="left:36px;top:122px" width="35" height="35" viewBox="0 0 35 35"><path d="M6 22.5 L29 12.3" stroke="#111" fill="none" stroke-width="1.2"/><path d="M27 29.5 L31 29.5 L31 25.5 Z" fill="#000"/></svg>
<div class="a" style="left:1px;top:157px;width:35px;height:35px;border:1px solid #8f8f8f;background:linear-gradient(#f6f6f6,#e6e6e6 40%,#f2f2f2 75%,#f8f8f8)"></div>
<svg style="left:1px;top:157px" width="35" height="35" viewBox="0 0 35 35"><path d="M7 25.5 A19.5 19.5 0 0 1 26.5 6" stroke="#111" fill="none" stroke-width="1.1"/><path d="M27 29.5 L31 29.5 L31 25.5 Z" fill="#000"/></svg>
<div class="a" style="left:36px;top:157px;width:35px;height:35px;border:1px solid #8f8f8f;background:linear-gradient(#f6f6f6,#e6e6e6 40%,#f2f2f2 75%,#f8f8f8)"></div>
<svg style="left:36px;top:157px" width="35" height="35" viewBox="0 0 35 35"><circle cx="16.3" cy="16.5" r="10.3" stroke="#111" fill="none" stroke-width="1.1"/><path d="M27 29.5 L31 29.5 L31 25.5 Z" fill="#000"/></svg>
<div class="a" style="left:1px;top:192px;width:35px;height:35px;border:1px solid #8f8f8f;background:linear-gradient(#f6f6f6,#e6e6e6 40%,#f2f2f2 75%,#f8f8f8)"></div>
<svg style="left:1px;top:192px" width="35" height="35" viewBox="0 0 35 35"><ellipse cx="17" cy="17" rx="13.5" ry="6.3" transform="rotate(-47 17 17)" stroke="#111" fill="none" stroke-width="1.1"/><path d="M27 29.5 L31 29.5 L31 25.5 Z" fill="#000"/></svg>
<div class="a" style="left:36px;top:192px;width:35px;height:35px;border:1px solid #8f8f8f;background:linear-gradient(#f6f6f6,#e6e6e6 40%,#f2f2f2 75%,#f8f8f8)"></div>
<svg style="left:36px;top:192px" width="35" height="35" viewBox="0 0 35 35"><path d="M5 8 C3 14 8 28 11 25 C14 22 15 12 19 8 C23 4 28 8 28 12 C28 16 23 17 19 14 C14 10 10 4 5 8 Z" stroke="#111" fill="none" stroke-width="1.1"/><path d="M27 29.5 L31 29.5 L31 25.5 Z" fill="#000"/></svg>
<div class="a" style="left:1px;top:227px;width:35px;height:35px;border:1px solid #8f8f8f;background:linear-gradient(#f6f6f6,#e6e6e6 40%,#f2f2f2 75%,#f8f8f8)"></div>
<svg style="left:1px;top:227px" width="35" height="35" viewBox="0 0 35 35"><path d="M11 11 C7 11 6 13.5 6.5 16 C7 18.5 9 19.5 12 19.5 L26.5 19.5" stroke="#111" fill="none" stroke-width="1.1"/><path d="M27 29.5 L31 29.5 L31 25.5 Z" fill="#000"/></svg>
<div class="a" style="left:36px;top:227px;width:35px;height:35px;border:1px solid #8f8f8f;background:linear-gradient(#f6f6f6,#e6e6e6 40%,#f2f2f2 75%,#f8f8f8)"></div>
<svg style="left:36px;top:227px" width="35" height="35" viewBox="0 0 35 35"><path d="M5 11 L8 5.5 L14.5 5.5 L17.5 11 L14.5 16.5 L8 16.5 Z M19 18 L24.5 9 L30 18 Z" stroke="#111" fill="none" stroke-width="1"/><rect x="5.5" y="21.5" width="14" height="7" stroke="#111" fill="none" stroke-width="1"/><path d="M27 29.5 L31 29.5 L31 25.5 Z" fill="#000"/></svg>
<div class="a" style="left:1px;top:262px;width:35px;height:35px;border:1px solid #8f8f8f;background:linear-gradient(#f6f6f6,#e6e6e6 40%,#f2f2f2 75%,#f8f8f8)"></div>
<svg style="left:1px;top:262px" width="35" height="35" viewBox="0 0 35 35"><defs><pattern id="hp" width="3" height="3" patternUnits="userSpaceOnUse" patternTransform="rotate(-45)"><rect width="3" height="3" fill="#eee"/><path d="M0 0 L3 0" stroke="#555" stroke-width="0.8"/></pattern></defs><path d="M6 15.5 L12.5 10 L27.5 10 L27.5 24 L6 24 Z" fill="url(#hp)" stroke="#111" stroke-width="1.1"/><circle cx="19.5" cy="17" r="3.2" fill="#f4f4f4" stroke="#111" stroke-width="1"/><path d="M27 29.5 L31 29.5 L31 25.5 Z" fill="#000"/></svg>
<div class="a" style="left:1px;top:305px;width:35px;height:35px;border:1px solid #8f8f8f;background:linear-gradient(#f6f6f6,#e6e6e6 40%,#f2f2f2 75%,#f8f8f8)"></div>
<svg style="left:1px;top:305px" width="35" height="35" viewBox="0 0 35 35"><text x="17" y="28" font-family="Liberation Serif" font-size="26" fill="#000" text-anchor="middle">A</text></svg>
<div class="a" style="left:36px;top:305px;width:35px;height:35px;border:1px solid #8f8f8f;background:linear-gradient(#f6f6f6,#e6e6e6 40%,#f2f2f2 75%,#f8f8f8)"></div>
<svg style="left:36px;top:305px" width="35" height="35" viewBox="0 0 35 35"><path d="M7.5 10 L7.5 24 M26 10 L26 24 M7.5 11.5 L26 11.5" stroke="#111" stroke-width="1.1"/><path d="M8 11.5 L12 9.5 L12 13.5 Z M25.5 11.5 L21.5 9.5 L21.5 13.5 Z" fill="#111"/><path d="M27 29.5 L31 29.5 L31 25.5 Z" fill="#000"/></svg>
<div class="a" style="left:1px;top:340px;width:35px;height:35px;border:1px solid #8f8f8f;background:linear-gradient(#f6f6f6,#e6e6e6 40%,#f2f2f2 75%,#f8f8f8)"></div>
<svg style="left:1px;top:340px" width="35" height="35" viewBox="0 0 35 35"><rect x="6.5" y="8.5" width="22" height="16" fill="#fff" stroke="#000" stroke-width="2"/><path d="M8.5 22.5 L13 15.5 L17 19 L20 16 L26.5 22.5 Z" fill="#000"/><circle cx="23" cy="12.5" r="1.8" fill="#000"/></svg>
<div class="a" style="left:1px;top:383px;width:35px;height:35px;border:1px solid #8f8f8f;background:linear-gradient(#f6f6f6,#e6e6e6 40%,#f2f2f2 75%,#f8f8f8)"></div>
<svg style="left:1px;top:383px" width="35" height="35" viewBox="0 0 35 35"><path d="M3.5 7 L3.5 29.5 L25 29.5 Z" fill="#f6f6f6" stroke="#111" stroke-width="1.2"/><path d="M7.5 19 L7.5 26 L14.5 26 Z" fill="none" stroke="#111" stroke-width="1"/><path d="M9 6 L18 14 L16.5 16 L7.5 8 Z" fill="#e83020" stroke="#6a1a0a" stroke-width="0.6"/><path d="M18 14 L20 16.5 L16.5 16 Z" fill="#f2d0a0"/><path d="M25 3 L22 21 M25 3 L28 21" stroke="#111" stroke-width="1.1" fill="none"/><circle cx="25" cy="4" r="1" fill="#111"/><path d="M27 29.5 L31 29.5 L31 25.5 Z" fill="#000"/></svg>
<div class="a" style="left:36px;top:383px;width:35px;height:35px;border:1px solid #8f8f8f;background:linear-gradient(#f6f6f6,#e6e6e6 40%,#f2f2f2 75%,#f8f8f8)"></div>
<svg style="left:36px;top:383px" width="35" height="35" viewBox="0 0 35 35"><rect x="4.5" y="12" width="26" height="9" rx="1" fill="#fafafa" stroke="#111" stroke-width="1.1"/><path d="M7 12 L7 15 M9.5 12 L9.5 14 M12 12 L12 15 M14.5 12 L14.5 14 M17 12 L17 16 M19.5 12 L19.5 14 M22 12 L22 15 M24.5 12 L24.5 14 M27 12 L27 15" stroke="#111" stroke-width="0.8"/></svg>
<div class="a" style="left:1px;top:419px;width:35px;height:35px;border:1px solid #8f8f8f;background:linear-gradient(#f6f6f6,#e6e6e6 40%,#f2f2f2 75%,#f8f8f8)"></div>
<svg style="left:1px;top:419px" width="35" height="35" viewBox="0 0 35 35"><rect x="6.5" y="6.5" width="17" height="14" fill="#f2ecd2" stroke="#9a9a8a" stroke-width="1"/><circle cx="22" cy="20" r="7.5" fill="#f0e8cc" fill-opacity="0.8" stroke="#9a9a8a" stroke-width="1"/><circle cx="6.5" cy="20.5" r="1.2" fill="#f06a6a"/></svg>
<div class="a" style="left:36px;top:419px;width:35px;height:35px;border:1px solid #8f8f8f;background:linear-gradient(#f6f6f6,#e6e6e6 40%,#f2f2f2 75%,#f8f8f8)"></div>
<svg style="left:36px;top:419px" width="35" height="35" viewBox="0 0 35 35"><path d="M5 16 L23 6" stroke="#e82020" stroke-width="1.2"/><path d="M14 10 L14 24 L17 21 L19.5 26 L21.5 25 L19 20 L23 20 Z" fill="#f4f4f4" stroke="#333" stroke-width="0.9"/><path d="M27 29.5 L31 29.5 L31 25.5 Z" fill="#000"/></svg>
<div class="a" style="left:1px;top:461px;width:35px;height:35px;border:1px solid #8f8f8f;background:linear-gradient(#f6f6f6,#e6e6e6 40%,#f2f2f2 75%,#f8f8f8)"></div>
<svg style="left:1px;top:461px" width="35" height="35" viewBox="0 0 35 35"><path d="M6 13 L19 7 L29 12 L29 24 L16 30 L6 25 Z M6 13 L16 18 L29 12 M16 18 L16 30" fill="none" stroke="#111" stroke-width="1.1" stroke-linejoin="round"/><path d="M27 29.5 L31 29.5 L31 25.5 Z" fill="#000"/></svg>
<div class="a" style="left:70px;top:107px;width:85px;height:691px;background:#c8c8c8"></div>
<div class="a" style="left:70px;top:107px;width:1085px;height:1px;background:#c8c8c8"></div>
<div class="a" style="left:72px;top:108px;width:1082px;height:24px;background:#d3d3d3"></div>
<svg style="left:79px;top:115px" width="9" height="9"><path d="M0.5 0.5L8.5 8.5M8.5 0.5L0.5 8.5" stroke="#6a6a6a" stroke-width="1"/></svg>
<svg style="left:95px;top:112px" width="14" height="14" viewBox="0 0 14 14">
<circle cx="6.5" cy="6.5" r="5.5" fill="#f4f4f4" stroke="#1f3c88" stroke-width="2"/>
<path d="M4 4l3 3" stroke="#c33" stroke-width="0.6"/><path d="M6 6l5 5" stroke="#f0b020" stroke-width="2"/>
<circle cx="11.5" cy="11.5" r="1" fill="#e05050"/></svg>
<div class="t" style="left:591.5px;top:112.5px;font-size:12px;line-height:14px;color:#222">* birdhouse.dxf</div>
<div class="a" style="left:72px;top:132px;width:1082px;height:23px;background:#ececec"></div>
<div class="a" style="left:72px;top:155px;width:23px;height:577px;background:#ececec"></div>
<svg style="left:0;top:0" width="1500" height="844"><defs><clipPath id="crt"><rect x="95" y="132" width="1044" height="23"/></clipPath><clipPath id="crl"><rect x="72" y="155" width="23" height="577"/></clipPath></defs><g clip-path="url(#crt)" font-family="Liberation Sans" font-size="9.3" fill="#141414" text-anchor="middle"><line x1="97.5" y1="148" x2="97.5" y2="155" stroke="#606060"/><text x="97.6" y="140.8">-80</text><line x1="120.5" y1="148" x2="120.5" y2="155" stroke="#606060"/><text x="120.3" y="140.8">-70</text><line x1="143.5" y1="148" x2="143.5" y2="155" stroke="#606060"/><text x="143.0" y="140.8">-60</text><line x1="165.5" y1="148" x2="165.5" y2="155" stroke="#606060"/><text x="165.7" y="140.8">-50</text><line x1="188.5" y1="148" x2="188.5" y2="155" stroke="#606060"/><text x="188.5" y="140.8">-40</text><line x1="211.5" y1="148" x2="211.5" y2="155" stroke="#606060"/><text x="211.2" y="140.8">-30</text><line x1="233.5" y1="148" x2="233.5" y2="155" stroke="#606060"/><text x="233.9" y="140.8">-20</text><line x1="256.5" y1="148" x2="256.5" y2="155" stroke="#606060"/><text x="256.7" y="140.8">-10</text><line x1="279.5" y1="148" x2="279.5" y2="155" stroke="#606060"/><text x="279.4" y="140.8">0</text><line x1="302.5" y1="148" x2="302.5" y2="155" stroke="#606060"/><text x="302.1" y="140.8">10</text><line x1="324.5" y1="148" x2="324.5" y2="155" stroke="#606060"/><text x="324.9" y="140.8">20</text><line x1="347.5" y1="148" x2="347.5" y2="155" stroke="#606060"/><text x="347.6" y="140.8">30</text><line x1="370.5" y1="148" x2="370.5" y2="155" stroke="#606060"/><text x="370.3" y="140.8">40</text><line x1="393.5" y1="148" x2="393.5" y2="155" stroke="#606060"/><text x="393.0" y="140.8">50</text><line x1="415.5" y1="148" x2="415.5" y2="155" stroke="#606060"/><text x="415.8" y="140.8">60</text><line x1="438.5" y1="148" x2="438.5" y2="155" stroke="#606060"/><text x="438.5" y="140.8">70</text><line x1="461.5" y1="148" x2="461.5" y2="155" stroke="#606060"/><text x="461.2" y="140.8">80</text><line x1="483.5" y1="148" x2="483.5" y2="155" stroke="#606060"/><text x="484.0" y="140.8">90</text><line x1="506.5" y1="148" x2="506.5" y2="155" stroke="#606060"/><text x="506.7" y="140.8">100</text><line x1="529.5" y1="148" x2="529.5" y2="155" stroke="#606060"/><text x="529.4" y="140.8">110</text><line x1="552.5" y1="148" x2="552.5" y2="155" stroke="#606060"/><text x="552.2" y="140.8">120</text><line x1="574.5" y1="148" x2="574.5" y2="155" stroke="#606060"/><text x="574.9" y="140.8">130</text><line x1="597.5" y1="148" x2="597.5" y2="155" stroke="#606060"/><text x="597.6" y="140.8">140</text><line x1="620.5" y1="148" x2="620.5" y2="155" stroke="#606060"/><text x="620.4" y="140.8">150</text><line x1="643.5" y1="148" x2="643.5" y2="155" stroke="#606060"/><text x="643.1" y="140.8">160</text><line x1="665.5" y1="148" x2="665.5" y2="155" stroke="#606060"/><text x="665.8" y="140.8">170</text><line x1="688.5" y1="148" x2="688.5" y2="155" stroke="#606060"/><text x="688.5" y="140.8">180</text><line x1="711.5" y1="148" x2="711.5" y2="155" stroke="#606060"/><text x="711.3" y="140.8">190</text><line x1="734.5" y1="148" x2="734.5" y2="155" stroke="#606060"/><text x="734.0" y="140.8">200</text><line x1="756.5" y1="148" x2="756.5" y2="155" stroke="#606060"/><text x="756.7" y="140.8">210</text><line x1="779.5" y1="148" x2="779.5" y2="155" stroke="#606060"/><text x="779.5" y="140.8">220</text><line x1="802.5" y1="148" x2="802.5" y2="155" stroke="#606060"/><text x="802.2" y="140.8">230</text><line x1="824.5" y1="148" x2="824.5" y2="155" stroke="#606060"/><text x="824.9" y="140.8">240</text><line x1="847.5" y1="148" x2="847.5" y2="155" stroke="#606060"/><text x="847.6" y="140.8">250</text><line x1="870.5" y1="148" x2="870.5" y2="155" stroke="#606060"/><text x="870.4" y="140.8">260</text><line x1="893.5" y1="148" x2="893.5" y2="155" stroke="#606060"/><text x="893.1" y="140.8">270</text><line x1="915.5" y1="148" x2="915.5" y2="155" stroke="#606060"/><text x="915.8" y="140.8">280</text><line x1="938.5" y1="148" x2="938.5" y2="155" stroke="#606060"/><text x="938.6" y="140.8">290</text><line x1="961.5" y1="148" x2="961.5" y2="155" stroke="#606060"/><text x="961.3" y="140.8">300</text><line x1="984.5" y1="148" x2="984.5" y2="155" stroke="#606060"/><text x="984.0" y="140.8">310</text><line x1="1006.5" y1="148" x2="1006.5" y2="155" stroke="#606060"/><text x="1006.8" y="140.8">320</text><line x1="1029.5" y1="148" x2="1029.5" y2="155" stroke="#606060"/><text x="1029.5" y="140.8">330</text><line x1="1052.5" y1="148" x2="1052.5" y2="155" stroke="#606060"/><text x="1052.2" y="140.8">340</text><line x1="1074.5" y1="148" x2="1074.5" y2="155" stroke="#606060"/><text x="1075.0" y="140.8">350</text><line x1="1097.5" y1="148" x2="1097.5" y2="155" stroke="#606060"/><text x="1097.7" y="140.8">360</text><line x1="1120.5" y1="148" x2="1120.5" y2="155" stroke="#606060"/><text x="1120.4" y="140.8">370</text><line x1="1143.5" y1="148" x2="1143.5" y2="155" stroke="#606060"/><text x="1143.1" y="140.8">380</text></g><g clip-path="url(#crl)" font-family="Liberation Sans" font-size="9.3" fill="#141414" text-anchor="middle"><line x1="88" y1="750.5" x2="95" y2="750.5" stroke="#606060"/><text transform="translate(81.2 749.3) rotate(-90)" x="0" y="0">-30</text><line x1="88" y1="727.5" x2="95" y2="727.5" stroke="#606060"/><text transform="translate(81.2 726.6) rotate(-90)" x="0" y="0">-20</text><line x1="88" y1="704.5" x2="95" y2="704.5" stroke="#606060"/><text transform="translate(81.2 703.8) rotate(-90)" x="0" y="0">-10</text><line x1="88" y1="682.5" x2="95" y2="682.5" stroke="#606060"/><text transform="translate(81.2 681.1) rotate(-90)" x="0" y="0">0</text><line x1="88" y1="659.5" x2="95" y2="659.5" stroke="#606060"/><text transform="translate(81.2 658.4) rotate(-90)" x="0" y="0">10</text><line x1="88" y1="636.5" x2="95" y2="636.5" stroke="#606060"/><text transform="translate(81.2 635.6) rotate(-90)" x="0" y="0">20</text><line x1="88" y1="613.5" x2="95" y2="613.5" stroke="#606060"/><text transform="translate(81.2 612.9) rotate(-90)" x="0" y="0">30</text><line x1="88" y1="591.5" x2="95" y2="591.5" stroke="#606060"/><text transform="translate(81.2 590.2) rotate(-90)" x="0" y="0">40</text><line x1="88" y1="568.5" x2="95" y2="568.5" stroke="#606060"/><text transform="translate(81.2 567.5) rotate(-90)" x="0" y="0">50</text><line x1="88" y1="545.5" x2="95" y2="545.5" stroke="#606060"/><text transform="translate(81.2 544.7) rotate(-90)" x="0" y="0">60</text><line x1="88" y1="522.5" x2="95" y2="522.5" stroke="#606060"/><text transform="translate(81.2 522.0) rotate(-90)" x="0" y="0">70</text><line x1="88" y1="500.5" x2="95" y2="500.5" stroke="#606060"/><text transform="translate(81.2 499.3) rotate(-90)" x="0" y="0">80</text><line x1="88" y1="477.5" x2="95" y2="477.5" stroke="#606060"/><text transform="translate(81.2 476.5) rotate(-90)" x="0" y="0">90</text><line x1="88" y1="454.5" x2="95" y2="454.5" stroke="#606060"/><text transform="translate(81.2 453.8) rotate(-90)" x="0" y="0">100</text><line x1="88" y1="432.5" x2="95" y2="432.5" stroke="#606060"/><text transform="translate(81.2 431.1) rotate(-90)" x="0" y="0">110</text><line x1="88" y1="409.5" x2="95" y2="409.5" stroke="#606060"/><text transform="translate(81.2 408.3) rotate(-90)" x="0" y="0">120</text><line x1="88" y1="386.5" x2="95" y2="386.5" stroke="#606060"/><text transform="translate(81.2 385.6) rotate(-90)" x="0" y="0">130</text><line x1="88" y1="363.5" x2="95" y2="363.5" stroke="#606060"/><text transform="translate(81.2 362.9) rotate(-90)" x="0" y="0">140</text><line x1="88" y1="341.5" x2="95" y2="341.5" stroke="#606060"/><text transform="translate(81.2 340.1) rotate(-90)" x="0" y="0">150</text><line x1="88" y1="318.5" x2="95" y2="318.5" stroke="#606060"/><text transform="translate(81.2 317.4) rotate(-90)" x="0" y="0">160</text><line x1="88" y1="295.5" x2="95" y2="295.5" stroke="#606060"/><text transform="translate(81.2 294.7) rotate(-90)" x="0" y="0">170</text><line x1="88" y1="272.5" x2="95" y2="272.5" stroke="#606060"/><text transform="translate(81.2 272.0) rotate(-90)" x="0" y="0">180</text><line x1="88" y1="250.5" x2="95" y2="250.5" stroke="#606060"/><text transform="translate(81.2 249.2) rotate(-90)" x="0" y="0">190</text><line x1="88" y1="227.5" x2="95" y2="227.5" stroke="#606060"/><text transform="translate(81.2 226.5) rotate(-90)" x="0" y="0">200</text><line x1="88" y1="204.5" x2="95" y2="204.5" stroke="#606060"/><text transform="translate(81.2 203.8) rotate(-90)" x="0" y="0">210</text><line x1="88" y1="182.5" x2="95" y2="182.5" stroke="#606060"/><text transform="translate(81.2 181.0) rotate(-90)" x="0" y="0">220</text><line x1="88" y1="159.5" x2="95" y2="159.5" stroke="#606060"/><text transform="translate(81.2 158.3) rotate(-90)" x="0" y="0">230</text></g><path d="M626 145L637 145L631.5 151Z" fill="#000"/><path d="M85 404L92 409.5L85 415Z" fill="#000"/></svg>
<svg style="left:0;top:0" width="1500" height="844">
<defs><clipPath id="cc"><rect x="95" y="155" width="1044" height="577"/></clipPath>
<pattern id="gd" x="278.40" y="681.60" width="22.7300" height="22.7300" patternUnits="userSpaceOnUse"><rect width="1.2" height="1.2" fill="rgba(255,255,255,0.3)"/></pattern>
<radialGradient id="mg" cx="0.5" cy="0.5" r="0.5"><stop offset="0.7" stop-color="#ffffff" stop-opacity="0"/><stop offset="0.8" stop-color="#e4ebf2"/><stop offset="0.85" stop-color="#c2d0de"/><stop offset="0.88" stop-color="#d6e0ea"/><stop offset="0.91" stop-color="#aebfd0"/><stop offset="0.94" stop-color="#c4d1de"/><stop offset="0.97" stop-color="#a2b5c7"/><stop offset="1" stop-color="#c4d0dc" stop-opacity="0.6"/></radialGradient>
</defs><g clip-path="url(#cc)">
<rect x="95" y="155" width="1044" height="577" fill="#d3d3d3"/>
<rect x="289" y="683" width="675" height="8.5" fill="#808080"/>
<rect x="955" y="214.3" width="9" height="477.2" fill="#808080"/>
<rect x="279" y="204" width="676" height="479" fill="#c4c4c4"/>
<rect x="281" y="206" width="672" height="475" fill="#ffffff"/>
<line x1="279.4" y1="155" x2="279.4" y2="732" stroke="rgba(0,0,0,0.03)" stroke-width="1"/>
<line x1="506.7" y1="155" x2="506.7" y2="732" stroke="rgba(0,0,0,0.03)" stroke-width="1"/>
<line x1="734.0" y1="155" x2="734.0" y2="732" stroke="rgba(0,0,0,0.03)" stroke-width="1"/>
<line x1="961.3" y1="155" x2="961.3" y2="732" stroke="rgba(0,0,0,0.03)" stroke-width="1"/>
<line x1="1188.6" y1="155" x2="1188.6" y2="732" stroke="rgba(0,0,0,0.03)" stroke-width="1"/>
<line x1="95" y1="682.1" x2="1139" y2="682.1" stroke="rgba(0,0,0,0.03)" stroke-width="1"/>
<line x1="95" y1="454.8" x2="1139" y2="454.8" stroke="rgba(0,0,0,0.03)" stroke-width="1"/>
<line x1="95" y1="227.5" x2="1139" y2="227.5" stroke="rgba(0,0,0,0.03)" stroke-width="1"/>
<rect x="302.6" y="227.8" width="629.2" height="431.6" fill="none" stroke="#8c8cf4" stroke-width="2.6"/>
<rect x="302.6" y="227.8" width="629.2" height="431.6" fill="none" stroke="#383880" stroke-width="1.3"/>
<rect x="305.3" y="232.5" width="221.3" height="308.3" fill="none" stroke="#ff5cff" stroke-width="1.2" stroke-dasharray="4 1.6 0.9 1.6"/>
<rect x="512.6" y="278.4" width="216" height="262" fill="none" stroke="#c03ac8" stroke-width="1.2" stroke-dasharray="4 1.6 0.9 1.6"/>
<path d="M404.5 304.9 L404.5 280 A15 15 0 0 1 434.5 280 L434.5 304.9 L461.1 326 L463.3 323 L481 336.9 L478.2 340.5 L510.2 366.8 L489.9 486.5 L453.5 486.5 L453.5 491.5 L487 491.5 Q489.5 491.5 489 494.5 L488.8 499.5 Q488.5 502.5 486.5 502.5 L353 502.5 Q350.5 502.5 350.5 499.5 L350.5 494 Q350.5 491.5 353 491.5 L385.5 491.5 L385.5 486.5 L349.1 486.5 L328.8 366.8 L360.8 340.5 L358 336.9 L375.7 323 L377.9 326 Z" fill="none" stroke="#666666" stroke-width="1"/>
<circle cx="419.5" cy="279.8" r="3.4" fill="none" stroke="#666666" stroke-width="1"/>
<path d="M387.39 386.23 A32.0 32.0 0 1 1 443.51 404.72 L436.87 394.29 428.82 380.83 424.55 376.28 419.34 372.68 419.34 366.99 423.41 363.77 416.02 362.06 C412.70 360.64 407.96 361.11 405.59 364.91 C403.22 368.70 404.17 375.33 402.56 381.02 C401.33 387.65 404.17 392.87 408.44 395.24 L414.88 398.08 415.55 399.50 413.93 400.73 Z" fill="none" stroke="#666666" stroke-width="0.9"/>
<path d="M388.34 390.02 L428.82 414.95 Q425.50 416.28 419.34 416.28 A32.0 32.0 0 0 1 388.34 390.02 Z" fill="none" stroke="#666666" stroke-width="0.9"/>
<path d="M422.18 402.35 C423.13 399.98 426.45 398.55 429.29 399.79 L437.35 402.16 442.75 406.61 434.22 412.68 423.41 406.61 C421.71 405.66 421.71 403.77 422.18 402.35 Z" fill="none" stroke="#666666" stroke-width="0.9"/>
<path d="M419.05 399.79 C416.49 399.50 416.02 402.82 418.39 403.77" fill="none" stroke="#222" stroke-width="1.3"/>
<path d="M423.13 405.66 l1.5 1" stroke="#222" stroke-width="1.4"/>
<path d="M407.49 401.87 l0.5 1.2" stroke="#444" stroke-width="0.8"/>
<path d="M436.40 401.87 l1 0.6" stroke="#444" stroke-width="0.8"/>
<path d="M544.5 293.5 Q544.5 292.5 545.5 292.5 L705.5 292.5 L705.5 303.5 L686.5 303.5 L686.5 307.5 L705.5 307.5 L705.5 480.5 L686.5 480.5 L686.5 485.5 L705.5 485.5 L705.5 496.5 L545.5 496.5 Q544.5 496.5 544.5 495.5 Z" fill="none" stroke="#707070" stroke-width="1"/>
<rect x="629.5" y="303.5" width="23" height="4" fill="none" stroke="#707070" stroke-width="1"/>
<rect x="629.5" y="480.5" width="23" height="5" fill="none" stroke="#707070" stroke-width="1"/>
<line x1="419.5" y1="241.2" x2="419.5" y2="526" stroke="#f04848" stroke-width="1" stroke-dasharray="11 4.2 1 4.2" stroke-dashoffset="7.70"/>
<line x1="419.5" y1="378.7" x2="419.5" y2="389.7" stroke="#f04848" stroke-width="1"/>
<line x1="396" y1="279.8" x2="443" y2="279.8" stroke="#f04848" stroke-width="1" stroke-dasharray="11 4.2 1 4.2" stroke-dashoffset="2.40"/>
<line x1="373.6" y1="384.2" x2="465.3" y2="384.2" stroke="#f04848" stroke-width="1" stroke-dasharray="11 4.2 1 4.2" stroke-dashoffset="0.40"/>
<g stroke="#3a3a3a" stroke-width="1"><line x1="545.5" y1="577.5" x2="931.5" y2="577.5"/><line x1="545.5" y1="591.5" x2="931.5" y2="591.5"/><line x1="545.5" y1="613.5" x2="931.5" y2="613.5"/><line x1="715.5" y1="636.5" x2="931.5" y2="636.5"/><line x1="545.5" y1="577.5" x2="545.5" y2="659.5"/><line x1="579.5" y1="577.5" x2="579.5" y2="591.5"/><line x1="618.5" y1="577.5" x2="618.5" y2="613.5"/><line x1="818.5" y1="577.5" x2="818.5" y2="613.5"/><line x1="674.5" y1="591.5" x2="674.5" y2="613.5"/><line x1="761.5" y1="591.5" x2="761.5" y2="613.5"/><line x1="886.5" y1="591.5" x2="886.5" y2="613.5"/><line x1="715.5" y1="613.5" x2="715.5" y2="659.5"/><line x1="852.5" y1="636.5" x2="852.5" y2="659.5"/><line x1="886.5" y1="636.5" x2="886.5" y2="659.5"/></g>
<text x="548.7" y="586.6" font-family="Liberation Sans" font-size="5.6" fill="#222">Item ref</text>
<text x="583" y="586.6" font-family="Liberation Sans" font-size="5.6" fill="#222">Quantity</text>
<text x="622" y="586.6" font-family="Liberation Sans" font-size="5.6" fill="#222">Title/Name, destination, material, dimension etc</text>
<text x="822.3" y="586.6" font-family="Liberation Sans" font-size="5.6" fill="#222">Article No./Reference</text>
<text x="548.7" y="599.3" font-family="Liberation Sans" font-size="5.6" fill="#222">Designed by</text>
<text x="621.3" y="599.3" font-family="Liberation Sans" font-size="5.6" fill="#222">Checked by</text>
<text x="689.3" y="599.3" font-family="Liberation Sans" font-size="5.6" fill="#222">Approved by - date</text>
<text x="768" y="599.6" font-family="Liberation Sans" font-size="5.6" fill="#222">Filename</text>
<text x="821.7" y="599.6" font-family="Liberation Sans" font-size="5.6" fill="#222">Date</text>
<text x="890" y="599.6" font-family="Liberation Sans" font-size="5.6" fill="#222">Scale</text>
<text x="856" y="644.3" font-family="Liberation Sans" font-size="5.6" fill="#222">Edition</text>
<text x="891.7" y="644.3" font-family="Liberation Sans" font-size="5.6" fill="#222">Sheet</text>
<text x="810.3" y="609.5" font-family="Liberation Sans" font-size="5.6" fill="#222" font-size="6" text-anchor="end">file.dxf</text>
<text x="879.2" y="609.4" font-family="Liberation Sans" font-size="9.4" fill="#111" text-anchor="end">01/01/2025</text>
<text x="925.4" y="609.4" font-family="Liberation Sans" font-size="9.4" fill="#111" text-anchor="end">1:1</text>
<text x="925.4" y="654.4" font-family="Liberation Sans" font-size="9.4" fill="#111" text-anchor="end">1/1</text>
<text x="722.8" y="631.8" font-family="Liberation Sans" font-size="15.8" fill="#111">Title</text>
<rect x="95" y="155" width="1044" height="577" fill="url(#gd)"/>
<line x1="259.4" y1="682.1" x2="300" y2="682.1" stroke="#e06a6a" stroke-width="1.3"/>
<line x1="279.4" y1="662" x2="279.4" y2="702" stroke="#e06a6a" stroke-width="1.3"/>
<circle cx="630.8" cy="408.6" r="39.2" fill="url(#mg)"/>
<circle cx="620.5" cy="409.4" r="5.2" fill="none" stroke="#f04848" stroke-width="0.9"/>
<line x1="615.3" y1="409.4" x2="625.7" y2="409.4" stroke="#f04848" stroke-width="0.8"/><line x1="620.5" y1="404.2" x2="620.5" y2="414.6" stroke="#f04848" stroke-width="0.8"/>
<path d="M631.5 409 L631.5 430.5 L636 426 L641.3 435.5 L645 433.8 L640.3 424.6 L646.7 424.3 Z" fill="#fff" stroke="#000" stroke-width="0.95" stroke-linejoin="miter"/>
</g></svg>
<!-- scrollbars -->
<div class="a" style="left:1139px;top:155px;width:14.5px;height:577px;background:#fafafa"></div>
<div class="a" style="left:1143px;top:310px;width:8px;height:266px;background:#7c7c7c;border-radius:4px"></div>
<div class="a" style="left:72px;top:732px;width:23px;height:16px;background:#ececec"></div>
<div class="a" style="left:95px;top:732px;width:988px;height:15px;background:#f9f9f9"></div>
<div class="a" style="left:231px;top:736px;width:717px;height:8px;background:#7a7a7a;border-radius:4px"></div>
<div class="a" style="left:1083px;top:732px;width:70.5px;height:16px;background:#ececec"></div>
<div class="t" style="left:1103px;top:733px;font-size:13px;line-height:15px;color:#111">10 &lt; 100</div>
<div class="a" style="left:72px;top:747px;width:1081.5px;height:1px;background:#e2e2e2"></div>
<div class="a" style="left:72px;top:748px;width:1081.5px;height:2px;background:#bababa"></div>
<!-- command output -->
<div class="a" style="left:72.5px;top:750px;width:1081px;height:20px;background:#fff"></div>
<div class="t" style="left:77px;top:750.5px;font-size:13.6px;line-height:15px;color:#0000d0"><i>Comando:</i> vt</div>
<div class="a" style="left:1142px;top:749.5px;width:8px;height:17.5px;background:#7c7c7c;border-radius:4px"></div>
<div class="a" style="left:72px;top:770px;width:1081.5px;height:1.5px;background:#b8b8b8"></div>
<div class="a" style="left:72px;top:771.5px;width:1081.5px;height:26px;background:#ececec"></div>
<div class="t" style="left:73.5px;top:777.5px;font-size:13.4px;line-height:15px;color:#0a0a0a">Comando:</div>
<div class="a" style="left:138px;top:776px;width:989px;height:18px;background:#fff"></div>
<div class="a" style="left:1127.5px;top:772.5px;width:25px;height:25px;border:1px solid #a8a8a8;background:linear-gradient(#f4f4f4,#e4e4e4)"></div>
<svg style="left:1132px;top:778px" width="16" height="13" viewBox="0 0 16 13"><rect x="0.5" y="1.5" width="15" height="10.5" fill="#fff" stroke="#222" stroke-width="0.9"/><rect x="0.5" y="1.5" width="15" height="2.6" fill="#111"/></svg>
<div class="a" style="left:72px;top:797px;width:1081.5px;height:1px;background:#cacaca"></div>

<div class="a" style="left:1153px;top:107px;width:302px;height:691px;background:#c9c9c9"></div>
<div class="a" style="left:1154px;top:108px;width:301px;height:23px;background:linear-gradient(#ececec,#dadada)"></div>
<svg style="left:1157px;top:111px" width="14" height="14" viewBox="0 0 14 14"><circle cx="7" cy="7" r="6.8" fill="#6a6a6a"/><path d="M4.3 4.3 L9.7 9.7 M9.7 4.3 L4.3 9.7" stroke="#fff" stroke-width="1.8"/></svg>
<svg style="left:1175px;top:111px" width="14" height="14" viewBox="0 0 14 14"><circle cx="7" cy="7" r="6.8" fill="#6a6a6a"/><rect x="3.6" y="6" width="5" height="4" fill="none" stroke="#fff" stroke-width="1"/><path d="M5.6 6 L5.6 4 L10.4 4 L10.4 8 L8.6 8" fill="none" stroke="#fff" stroke-width="1"/></svg>
<div class="t" style="left:1190px;top:112px;font-size:12px;line-height:15px;color:#141414;width:264px;text-align:center;color:#1c1c1c">Lista de bloques</div>
<div class="a" style="left:1154px;top:130px;width:301px;height:26px;background:#a9a9a9"></div>
<div class="a" style="left:1155.5px;top:131px;width:36.5px;height:24px;background:linear-gradient(#f7f7f7,#ececec)"></div>
<div class="a" style="left:1193.5px;top:131px;width:36.0px;height:24px;background:linear-gradient(#f7f7f7,#ececec)"></div>
<div class="a" style="left:1231px;top:131px;width:36.0px;height:24px;background:linear-gradient(#f7f7f7,#ececec)"></div>
<div class="a" style="left:1268.5px;top:131px;width:36.0px;height:24px;background:linear-gradient(#f7f7f7,#ececec)"></div>
<div class="a" style="left:1306px;top:131px;width:36.0px;height:24px;background:linear-gradient(#f7f7f7,#ececec)"></div>
<div class="a" style="left:1343.5px;top:131px;width:36.0px;height:24px;background:linear-gradient(#f7f7f7,#ececec)"></div>
<div class="a" style="left:1381px;top:131px;width:36.0px;height:24px;background:linear-gradient(#f7f7f7,#ececec)"></div>
<div class="a" style="left:1418.5px;top:131px;width:36.0px;height:24px;background:linear-gradient(#f7f7f7,#ececec)"></div>
<svg style="left:1166.5px;top:137px" width="15" height="12" viewBox="0 0 15 12"><path d="M0.3 6.3 C2.2 -1.2 12.8 -1.2 14.7 6.3 C12.8 13.6 2.2 13.6 0.3 6.3 Z" fill="#000"/><path d="M2.5 6.6 C4.2 2.2 10.8 2.2 12.5 6.6 C10.8 10.6 4.2 10.6 2.5 6.6 Z" fill="#fff"/><circle cx="7.5" cy="5.8" r="3.1" fill="#000"/><path d="M6.3 4.3 L7.3 5.6" stroke="#fff" stroke-width="0.7"/></svg>
<svg style="left:1204px;top:137px" width="15" height="12" viewBox="0 0 15 12"><path d="M0.3 6.3 C2.2 -1.2 12.8 -1.2 14.7 6.3 C12.8 13.6 2.2 13.6 0.3 6.3 Z" fill="#a8a8a8"/><path d="M2.5 6.6 C4.2 2.2 10.8 2.2 12.5 6.6 C10.8 10.6 4.2 10.6 2.5 6.6 Z" fill="#f2f2f2"/><circle cx="7.5" cy="5.8" r="3.1" fill="#a8a8a8"/><path d="M6.3 4.3 L7.3 5.6" stroke="#f2f2f2" stroke-width="0.7"/></svg>
<svg style="left:1241px;top:136px" width="14" height="14" viewBox="0 0 14 14"><path d="M7 1 L7 13 M1 7 L13 7" stroke="#e00" stroke-width="3"/></svg>
<svg style="left:1279px;top:140px" width="14" height="6" viewBox="0 0 14 6"><path d="M1 3 L13 3" stroke="#e00" stroke-width="3"/></svg>
<div class="t" style="left:1316px;top:135px;font-size:12px;line-height:14px;color:#222">a<span style="display:inline-block;width:1px;height:14px;background:#222;vertical-align:-3px;margin:0 0.5px"></span>b</div>
<svg style="left:1353.5px;top:135.5px" width="15" height="14" viewBox="0 0 15 14"><path d="M1 13.5 L2.5 10 L11 1.5 Q12.5 0.5 13.5 1.5 Q14.5 2.5 13.5 4 L5 12.5 Z" fill="#e2b25a" stroke="#8a6a2a" stroke-width="0.6"/><path d="M11 1.5 Q12.5 0.5 13.5 1.5 Q14.5 2.5 13.5 4 L12.2 2.8 Z" fill="#e8505a"/><path d="M1 13.5 L1.8 11 L3.5 12.7 Z" fill="#444"/></svg>
<svg style="left:1393px;top:136px" width="12" height="14" viewBox="0 0 12 14"><rect x="0.5" y="0.5" width="11" height="13" fill="#e2e2e2" stroke="#c0c0c0" stroke-width="0.6"/><path d="M3 2.5 L6.5 2.5 Q8 2.5 8 4.5 L8 10" fill="none" stroke="#1a4ae8" stroke-width="2.2"/><path d="M4.5 9 L8 13 L11.2 9 Z" fill="#1a4ae8"/></svg>
<svg style="left:1430.5px;top:137.5px" width="11" height="11" viewBox="0 0 11 11"><rect x="0.7" y="0.7" width="9.6" height="9.6" fill="#eb8e6e" stroke="#d84a30" stroke-width="1.2"/><path d="M3 3 L8 8 M8 3 L3 8" stroke="#fff" stroke-width="1.4"/></svg>
<div class="a" style="left:1155.5px;top:156px;width:298.5px;height:172.5px;background:#fff"></div>
<div class="a" style="left:1155.5px;top:197px;width:298.5px;height:20px;background:#d4d4d4"></div>
<svg style="left:1161.5px;top:161.5px" width="15" height="12" viewBox="0 0 15 12"><path d="M0.3 6.3 C2.2 -1.2 12.8 -1.2 14.7 6.3 C12.8 13.6 2.2 13.6 0.3 6.3 Z" fill="#000"/><path d="M2.5 6.6 C4.2 2.2 10.8 2.2 12.5 6.6 C10.8 10.6 4.2 10.6 2.5 6.6 Z" fill="#fff"/><circle cx="7.5" cy="5.8" r="3.1" fill="#000"/><path d="M6.3 4.3 L7.3 5.6" stroke="#fff" stroke-width="0.7"/></svg>
<svg style="left:1161.5px;top:181.5px" width="15" height="12" viewBox="0 0 15 12"><path d="M0.3 6.3 C2.2 -1.2 12.8 -1.2 14.7 6.3 C12.8 13.6 2.2 13.6 0.3 6.3 Z" fill="#000"/><path d="M2.5 6.6 C4.2 2.2 10.8 2.2 12.5 6.6 C10.8 10.6 4.2 10.6 2.5 6.6 Z" fill="#fff"/><circle cx="7.5" cy="5.8" r="3.1" fill="#000"/><path d="M6.3 4.3 L7.3 5.6" stroke="#fff" stroke-width="0.7"/></svg>
<svg style="left:1161.5px;top:201.5px" width="15" height="12" viewBox="0 0 15 12"><path d="M0.3 6.3 C2.2 -1.2 12.8 -1.2 14.7 6.3 C12.8 13.6 2.2 13.6 0.3 6.3 Z" fill="#3c4a5c"/><path d="M2.5 6.6 C4.2 2.2 10.8 2.2 12.5 6.6 C10.8 10.6 4.2 10.6 2.5 6.6 Z" fill="#d4d4d4"/><circle cx="7.5" cy="5.8" r="3.1" fill="#3c4a5c"/><path d="M6.3 4.3 L7.3 5.6" stroke="#d4d4d4" stroke-width="0.7"/></svg>
<svg style="left:1183.5px;top:180px" width="15" height="14" viewBox="0 0 15 14"><path d="M1 13.5 L2.5 10 L11 1.5 Q12.5 0.5 13.5 1.5 Q14.5 2.5 13.5 4 L5 12.5 Z" fill="#e2b25a" stroke="#8a6a2a" stroke-width="0.6"/><path d="M11 1.5 Q12.5 0.5 13.5 1.5 Q14.5 2.5 13.5 4 L12.2 2.8 Z" fill="#e8505a"/><path d="M1 13.5 L1.8 11 L3.5 12.7 Z" fill="#444"/></svg>
<div class="t" style="left:1205px;top:159px;font-size:13.4px;line-height:16.4px;color:#141414;">Model (*Model_Space)</div>
<div class="t" style="left:1205px;top:179px;font-size:13.4px;line-height:16.4px;color:#141414;">Layout1 (*Paper_Space)</div>
<div class="t" style="left:1205px;top:199px;font-size:13.4px;line-height:16.4px;color:#141414;">Borde</div>
<div class="a" style="left:1154px;top:328.5px;width:301px;height:1.5px;background:#b5b5b5"></div>
<div class="a" style="left:1154px;top:330px;width:301px;height:22px;background:linear-gradient(#ececec,#d8d8d8)"></div>
<svg style="left:1157px;top:333px" width="14" height="14" viewBox="0 0 14 14"><circle cx="7" cy="7" r="6.8" fill="#6a6a6a"/><path d="M4.3 4.3 L9.7 9.7 M9.7 4.3 L4.3 9.7" stroke="#fff" stroke-width="1.8"/></svg>
<svg style="left:1175px;top:333px" width="14" height="14" viewBox="0 0 14 14"><circle cx="7" cy="7" r="6.8" fill="#6a6a6a"/><rect x="3.6" y="6" width="5" height="4" fill="none" stroke="#fff" stroke-width="1"/><path d="M5.6 6 L5.6 4 L10.4 4 L10.4 8 L8.6 8" fill="none" stroke="#fff" stroke-width="1"/></svg>
<div class="t" style="left:1190px;top:334px;font-size:12px;line-height:15px;color:#141414;width:264px;text-align:center;color:#1c1c1c">Lista de capas</div>
<div class="a" style="left:1154px;top:352px;width:301px;height:26px;background:#a9a9a9"></div>
<div class="a" style="left:1155.5px;top:353px;width:58.5px;height:24px;background:linear-gradient(#f7f7f7,#ececec)"></div>
<div class="a" style="left:1215.5px;top:353px;width:58.5px;height:24px;background:linear-gradient(#f7f7f7,#ececec)"></div>
<div class="a" style="left:1275.5px;top:353px;width:58.0px;height:24px;background:linear-gradient(#f7f7f7,#ececec)"></div>
<div class="a" style="left:1335px;top:353px;width:58.0px;height:24px;background:linear-gradient(#f7f7f7,#ececec)"></div>
<div class="a" style="left:1394.5px;top:353px;width:60.0px;height:24px;background:linear-gradient(#f7f7f7,#ececec)"></div>
<svg style="left:1177.5px;top:359px" width="15" height="12" viewBox="0 0 15 12"><path d="M0.3 6.3 C2.2 -1.2 12.8 -1.2 14.7 6.3 C12.8 13.6 2.2 13.6 0.3 6.3 Z" fill="#000"/><path d="M2.5 6.6 C4.2 2.2 10.8 2.2 12.5 6.6 C10.8 10.6 4.2 10.6 2.5 6.6 Z" fill="#fff"/><circle cx="7.5" cy="5.8" r="3.1" fill="#000"/><path d="M6.3 4.3 L7.3 5.6" stroke="#fff" stroke-width="0.7"/></svg>
<svg style="left:1237px;top:359px" width="15" height="12" viewBox="0 0 15 12"><path d="M0.3 6.3 C2.2 -1.2 12.8 -1.2 14.7 6.3 C12.8 13.6 2.2 13.6 0.3 6.3 Z" fill="#a8a8a8"/><path d="M2.5 6.6 C4.2 2.2 10.8 2.2 12.5 6.6 C10.8 10.6 4.2 10.6 2.5 6.6 Z" fill="#f2f2f2"/><circle cx="7.5" cy="5.8" r="3.1" fill="#a8a8a8"/><path d="M6.3 4.3 L7.3 5.6" stroke="#f2f2f2" stroke-width="0.7"/></svg>
<svg style="left:1297.5px;top:358px" width="14" height="14" viewBox="0 0 14 14"><path d="M7 1 L7 13 M1 7 L13 7" stroke="#e00" stroke-width="3"/></svg>
<svg style="left:1357px;top:362px" width="14" height="6" viewBox="0 0 14 6"><path d="M1 3 L13 3" stroke="#e00" stroke-width="3"/></svg>
<svg style="left:1417px;top:357.5px" width="15" height="14" viewBox="0 0 15 14"><path d="M1 13.5 L2.5 10 L11 1.5 Q12.5 0.5 13.5 1.5 Q14.5 2.5 13.5 4 L5 12.5 Z" fill="#e2b25a" stroke="#8a6a2a" stroke-width="0.6"/><path d="M11 1.5 Q12.5 0.5 13.5 1.5 Q14.5 2.5 13.5 4 L12.2 2.8 Z" fill="#e8505a"/><path d="M1 13.5 L1.8 11 L3.5 12.7 Z" fill="#444"/></svg>
<div class="a" style="left:1155.5px;top:377.5px;width:298.5px;height:420.5px;background:#fff"></div>
<div class="a" style="left:1155.5px;top:479px;width:298.5px;height:20px;background:#0a4ddb"></div>
<div class="a" style="left:1161px;top:384.5px;width:16px;height:9.5px;background:#000;border:1px solid #000"></div>
<div class="t" style="left:1183.5px;top:381px;font-size:13.3px;line-height:16.3px;color:#141414;">0</div>
<svg style="left:1415.5px;top:383px" width="15" height="12" viewBox="0 0 15 12"><path d="M0.3 6.3 C2.2 -1.2 12.8 -1.2 14.7 6.3 C12.8 13.6 2.2 13.6 0.3 6.3 Z" fill="#000"/><path d="M2.5 6.6 C4.2 2.2 10.8 2.2 12.5 6.6 C10.8 10.6 4.2 10.6 2.5 6.6 Z" fill="#fff"/><circle cx="7.5" cy="5.8" r="3.1" fill="#000"/><path d="M6.3 4.3 L7.3 5.6" stroke="#fff" stroke-width="0.7"/></svg>
<svg style="left:1440px;top:382px" width="10" height="14" viewBox="0 0 10 14"><path d="M1.6 6.8 L1.6 4.6 A3.4 3.4 0 0 1 8.4 4.6 L8.4 6.8" fill="none" stroke="#b6b6b6" stroke-width="1.5"/><rect x="0" y="6.3" width="10" height="7.5" fill="#b6b6b6"/></svg>
<div class="a" style="left:1161px;top:404.5px;width:16px;height:9.5px;background:#0f7f7f;border:1px solid #000"></div>
<div class="t" style="left:1183.5px;top:401px;font-size:13.3px;line-height:16.3px;color:#141414;">Acotaciones</div>
<svg style="left:1415.5px;top:403px" width="15" height="12" viewBox="0 0 15 12"><path d="M0.3 6.3 C2.2 -1.2 12.8 -1.2 14.7 6.3 C12.8 13.6 2.2 13.6 0.3 6.3 Z" fill="#000"/><path d="M2.5 6.6 C4.2 2.2 10.8 2.2 12.5 6.6 C10.8 10.6 4.2 10.6 2.5 6.6 Z" fill="#fff"/><circle cx="7.5" cy="5.8" r="3.1" fill="#000"/><path d="M6.3 4.3 L7.3 5.6" stroke="#fff" stroke-width="0.7"/></svg>
<svg style="left:1440px;top:402px" width="10" height="14" viewBox="0 0 10 14"><path d="M1.6 6.8 L1.6 4.6 A3.4 3.4 0 0 1 8.4 4.6 L8.4 6.8" fill="none" stroke="#b6b6b6" stroke-width="1.5"/><rect x="0" y="6.3" width="10" height="7.5" fill="#b6b6b6"/></svg>
<div class="a" style="left:1161px;top:424.5px;width:16px;height:9.5px;background:#000;border:1px solid #000"></div>
<div class="t" style="left:1183.5px;top:421px;font-size:13.3px;line-height:16.3px;color:#141414;">Borde</div>
<svg style="left:1415.5px;top:423px" width="15" height="12" viewBox="0 0 15 12"><path d="M0.3 6.3 C2.2 -1.2 12.8 -1.2 14.7 6.3 C12.8 13.6 2.2 13.6 0.3 6.3 Z" fill="#000"/><path d="M2.5 6.6 C4.2 2.2 10.8 2.2 12.5 6.6 C10.8 10.6 4.2 10.6 2.5 6.6 Z" fill="#fff"/><circle cx="7.5" cy="5.8" r="3.1" fill="#000"/><path d="M6.3 4.3 L7.3 5.6" stroke="#fff" stroke-width="0.7"/></svg>
<svg style="left:1440px;top:422px" width="10" height="14" viewBox="0 0 10 14"><path d="M1.6 6.8 L1.6 4.6 A3.4 3.4 0 0 1 8.4 4.6 L8.4 6.8" fill="none" stroke="#b6b6b6" stroke-width="1.5"/><rect x="0" y="6.3" width="10" height="7.5" fill="#b6b6b6"/></svg>
<div class="a" style="left:1161px;top:444.5px;width:16px;height:9.5px;background:#f00;border:1px solid #000"></div>
<div class="t" style="left:1183.5px;top:441px;font-size:13.3px;line-height:16.3px;color:#141414;">Centro</div>
<svg style="left:1415.5px;top:443px" width="15" height="12" viewBox="0 0 15 12"><path d="M0.3 6.3 C2.2 -1.2 12.8 -1.2 14.7 6.3 C12.8 13.6 2.2 13.6 0.3 6.3 Z" fill="#000"/><path d="M2.5 6.6 C4.2 2.2 10.8 2.2 12.5 6.6 C10.8 10.6 4.2 10.6 2.5 6.6 Z" fill="#fff"/><circle cx="7.5" cy="5.8" r="3.1" fill="#000"/><path d="M6.3 4.3 L7.3 5.6" stroke="#fff" stroke-width="0.7"/></svg>
<svg style="left:1440px;top:442px" width="10" height="14" viewBox="0 0 10 14"><path d="M1.6 6.8 L1.6 4.6 A3.4 3.4 0 0 1 8.4 4.6 L8.4 6.8" fill="none" stroke="#b6b6b6" stroke-width="1.5"/><rect x="0" y="6.3" width="10" height="7.5" fill="#b6b6b6"/></svg>
<div class="a" style="left:1161px;top:464.5px;width:16px;height:9.5px;background:#fff;border:1px solid #000"></div>
<div class="t" style="left:1183.5px;top:461px;font-size:13.3px;line-height:16.3px;color:#141414;">Defpoints</div>
<svg style="left:1415.5px;top:463px" width="15" height="12" viewBox="0 0 15 12"><path d="M0.3 6.3 C2.2 -1.2 12.8 -1.2 14.7 6.3 C12.8 13.6 2.2 13.6 0.3 6.3 Z" fill="#000"/><path d="M2.5 6.6 C4.2 2.2 10.8 2.2 12.5 6.6 C10.8 10.6 4.2 10.6 2.5 6.6 Z" fill="#fff"/><circle cx="7.5" cy="5.8" r="3.1" fill="#000"/><path d="M6.3 4.3 L7.3 5.6" stroke="#fff" stroke-width="0.7"/></svg>
<svg style="left:1440px;top:462px" width="10" height="14" viewBox="0 0 10 14"><path d="M1.6 6.8 L1.6 4.6 A3.4 3.4 0 0 1 8.4 4.6 L8.4 6.8" fill="none" stroke="#b6b6b6" stroke-width="1.5"/><rect x="0" y="6.3" width="10" height="7.5" fill="#b6b6b6"/></svg>
<div class="a" style="left:1161px;top:484.5px;width:16px;height:9.5px;background:#e040f0;border:1px solid #000"></div>
<div class="t" style="left:1183.5px;top:481px;font-size:13.3px;line-height:16.3px;color:#fff;">Ventanas</div>
<svg style="left:1415.5px;top:483px" width="15" height="12" viewBox="0 0 15 12"><path d="M0.3 6.3 C2.2 -1.2 12.8 -1.2 14.7 6.3 C12.8 13.6 2.2 13.6 0.3 6.3 Z" fill="#2c3a54"/><path d="M2.5 6.6 C4.2 2.2 10.8 2.2 12.5 6.6 C10.8 10.6 4.2 10.6 2.5 6.6 Z" fill="#0a4ddb"/><circle cx="7.5" cy="5.8" r="3.1" fill="#2c3a54"/><path d="M6.3 4.3 L7.3 5.6" stroke="#0a4ddb" stroke-width="0.7"/></svg>
<svg style="left:1440px;top:482px" width="10" height="14" viewBox="0 0 10 14"><path d="M1.6 6.8 L1.6 4.6 A3.4 3.4 0 0 1 8.4 4.6 L8.4 6.8" fill="none" stroke="#aebccc" stroke-width="1.5"/><rect x="0" y="6.3" width="10" height="7.5" fill="#aebccc"/></svg>
<svg style="left:1394px;top:482.5px" width="15" height="14" viewBox="0 0 15 14"><path d="M1 13.5 L2.5 10 L11 1.5 Q12.5 0.5 13.5 1.5 Q14.5 2.5 13.5 4 L5 12.5 Z" fill="#e2b25a" stroke="#8a6a2a" stroke-width="0.6"/><path d="M11 1.5 Q12.5 0.5 13.5 1.5 Q14.5 2.5 13.5 4 L12.2 2.8 Z" fill="#e8505a"/><path d="M1 13.5 L1.8 11 L3.5 12.7 Z" fill="#444"/></svg>
<div class="a" style="left:1161px;top:504.5px;width:16px;height:9.5px;background:#000;border:1px solid #000"></div>
<div class="t" style="left:1183.5px;top:501px;font-size:13.3px;line-height:16.3px;color:#141414;">Visible</div>
<svg style="left:1415.5px;top:503px" width="15" height="12" viewBox="0 0 15 12"><path d="M0.3 6.3 C2.2 -1.2 12.8 -1.2 14.7 6.3 C12.8 13.6 2.2 13.6 0.3 6.3 Z" fill="#000"/><path d="M2.5 6.6 C4.2 2.2 10.8 2.2 12.5 6.6 C10.8 10.6 4.2 10.6 2.5 6.6 Z" fill="#fff"/><circle cx="7.5" cy="5.8" r="3.1" fill="#000"/><path d="M6.3 4.3 L7.3 5.6" stroke="#fff" stroke-width="0.7"/></svg>
<svg style="left:1440px;top:502px" width="10" height="14" viewBox="0 0 10 14"><path d="M1.6 6.8 L1.6 4.6 A3.4 3.4 0 0 1 8.4 4.6 L8.4 6.8" fill="none" stroke="#b6b6b6" stroke-width="1.5"/><rect x="0" y="6.3" width="10" height="7.5" fill="#b6b6b6"/></svg>
<div class="a" style="left:1454px;top:107px;width:1px;height:691px;background:#c6c6c6"></div>
<div class="a" style="left:1455px;top:107px;width:45px;height:691px;background:linear-gradient(90deg,#ededed,#e0e0e0 40%,#cbcbcb 94%,#b2b2b2)"></div>
<div class="a" style="left:1462px;top:116px;width:2px;height:2px;background:#a6a6a6"></div>
<div class="a" style="left:1468px;top:116px;width:2px;height:2px;background:#a6a6a6"></div>
<div class="a" style="left:1474px;top:116px;width:2px;height:2px;background:#a6a6a6"></div>
<div class="a" style="left:1480px;top:116px;width:2px;height:2px;background:#a6a6a6"></div>
<div class="a" style="left:1486px;top:116px;width:2px;height:2px;background:#a6a6a6"></div>
<div class="a" style="left:1456px;top:120px;width:42px;height:43px;background:#bcbcbc;border-radius:7px"></div>
<div class="a" style="left:1456px;top:167.5px;width:42px;height:42.0px;background:#bcbcbc;border-radius:7px"></div>
<div class="a" style="left:1456px;top:418px;width:42px;height:43px;background:#bcbcbc;border-radius:7px"></div>
<div class="a" style="left:1458px;top:262px;width:40px;height:1px;background:repeating-linear-gradient(90deg,#505050 0 1px,transparent 1px 3px)"></div>
<div class="a" style="left:1458px;top:410px;width:40px;height:1px;background:repeating-linear-gradient(90deg,#505050 0 1px,transparent 1px 3px)"></div>
<svg style="left:1463px;top:127px" width="28" height="28" viewBox="0 0 28 28"><rect x="0.6" y="0.6" width="26.8" height="26.3" fill="#fff" stroke="#444" stroke-width="1"/><rect x="0.6" y="0.6" width="26.8" height="4.6" fill="#000"/><rect x="1.6" y="1.3" width="3.6" height="3.6" fill="#fff" stroke="#333" stroke-width="0.4"/><path d="M8 12 L14 9 L14 20 L8 23 Z" fill="#b8b8b8" stroke="#555" stroke-width="0.7"/><path d="M11 12 L20 8 L20 19 L11 23 Z" fill="#eee" stroke="#555" stroke-width="0.7"/><path d="M13 19 L17 11 L18 18 Z" fill="none" stroke="#e04040" stroke-width="0.9"/></svg>
<svg style="left:1463px;top:174px" width="28" height="28" viewBox="0 0 28 28"><rect x="0.6" y="0.6" width="26.8" height="26.3" fill="#fff" stroke="#444" stroke-width="1"/><rect x="0.6" y="0.6" width="26.8" height="4.6" fill="#000"/><rect x="1.6" y="1.3" width="3.6" height="3.6" fill="#fff" stroke="#333" stroke-width="0.4"/><rect x="6" y="10" width="11" height="9" fill="#f2e2a8" stroke="#777" stroke-width="0.8"/><circle cx="17" cy="18" r="5" fill="#f0e4b8" fill-opacity="0.85" stroke="#777" stroke-width="0.8"/></svg>
<svg style="left:1463px;top:221px" width="28" height="28" viewBox="0 0 28 28"><rect x="0.6" y="0.6" width="26.8" height="26.3" fill="#fff" stroke="#444" stroke-width="1"/><rect x="0.6" y="0.6" width="26.8" height="4.6" fill="#000"/><rect x="1.6" y="1.3" width="3.6" height="3.6" fill="#fff" stroke="#333" stroke-width="0.4"/><rect x="6" y="10" width="16" height="12" rx="2" fill="#f4f4f4" stroke="#a8c0e0" stroke-width="1"/></svg>
<svg style="left:1463px;top:277px" width="28" height="28" viewBox="0 0 28 28"><rect x="0.6" y="0.6" width="26.8" height="26.3" fill="#fff" stroke="#444" stroke-width="1"/><rect x="0.6" y="0.6" width="26.8" height="4.6" fill="#000"/><rect x="1.6" y="1.3" width="3.6" height="3.6" fill="#fff" stroke="#333" stroke-width="0.4"/><rect x="4" y="9" width="3" height="2.5" fill="#000"/><rect x="4" y="14" width="3" height="2.5" fill="#000"/><rect x="4" y="19" width="3" height="2.5" fill="#000"/><rect x="9" y="9" width="14" height="2.5" fill="none" stroke="#444" stroke-width="0.8"/><rect x="9" y="14" width="14" height="2.5" fill="none" stroke="#444" stroke-width="0.8"/><rect x="9" y="19" width="14" height="2.5" fill="none" stroke="#444" stroke-width="0.8"/></svg>
<svg style="left:1463px;top:323.5px" width="28" height="28" viewBox="0 0 28 28"><rect x="0.6" y="0.6" width="26.8" height="26.3" fill="#fff" stroke="#444" stroke-width="1"/><rect x="0.6" y="0.6" width="26.8" height="4.6" fill="#000"/><rect x="1.6" y="1.3" width="3.6" height="3.6" fill="#fff" stroke="#333" stroke-width="0.4"/><defs><linearGradient id="fun" x1="0" y1="0" x2="1" y2="0"><stop offset="0" stop-color="#f4f4f4"/><stop offset="1" stop-color="#a8a8a8"/></linearGradient></defs><path d="M5 10.5 Q14 8 23 10.5 L16 17.5 L16 23 L12 24.5 L12 17.5 Z" fill="url(#fun)" stroke="#555" stroke-width="0.8"/><ellipse cx="14" cy="10.5" rx="9" ry="1.6" fill="#ccc" stroke="#555" stroke-width="0.6"/></svg>
<svg style="left:1463px;top:369px" width="28" height="28" viewBox="0 0 28 28"><rect x="0.6" y="0.6" width="26.8" height="26.3" fill="#fff" stroke="#444" stroke-width="1"/><rect x="0.6" y="0.6" width="26.8" height="4.6" fill="#000"/><rect x="1.6" y="1.3" width="3.6" height="3.6" fill="#fff" stroke="#333" stroke-width="0.4"/><path d="M5 9.5 L5 23.5 L12 18.5 L12 14.5 Z" fill="#f0f0f0" stroke="#444" stroke-width="0.9"/><rect x="12" y="13" width="10" height="7" rx="2" fill="#a8a8a8" stroke="#666" stroke-width="0.6"/><path d="M4 16.5 L25 16.5" stroke="#e06060" stroke-width="0.8" stroke-dasharray="1.5 1"/></svg>
<svg style="left:1463px;top:425px" width="28" height="28" viewBox="0 0 28 28"><rect x="0.6" y="0.6" width="26.8" height="26.3" fill="#fff" stroke="#444" stroke-width="1"/><rect x="0.6" y="0.6" width="26.8" height="4.6" fill="#000"/><rect x="1.6" y="1.3" width="3.6" height="3.6" fill="#fff" stroke="#333" stroke-width="0.4"/><g fill="#666" font-family="Liberation Sans" font-size="3.2"><text x="3" y="10">Constant str.</text><text x="3" y="13.5">Declared Aa</text><text x="3" y="17">Coordinate XOY</text><text x="3" y="20.5">Coordinate BOX</text></g><path d="M1 23.5 L27 23.5" stroke="#444" stroke-width="0.6"/><text x="3" y="26.6" font-family="Liberation Sans" font-size="3.4" fill="#333">c:  comment</text></svg>
<svg style="left:1463px;top:472px" width="28" height="28" viewBox="0 0 28 28"><rect x="0.6" y="0.6" width="26.8" height="26.3" fill="#fff" stroke="#444" stroke-width="1"/><rect x="0.6" y="0.6" width="26.8" height="4.6" fill="#000"/><rect x="1.6" y="1.3" width="3.6" height="3.6" fill="#fff" stroke="#333" stroke-width="0.4"/><rect x="7.5" y="9.5" width="13" height="15.5" rx="1" fill="#c8963c" stroke="#8a6a2a" stroke-width="0.6"/><path d="M9.2 11.5 L18.8 11.5 L18.8 21 L16.5 23.3 L9.2 23.3 Z" fill="#f4f4f4"/><rect x="11" y="8" width="6" height="3" rx="0.8" fill="#8a8a82"/><path d="M10.5 14 L17.5 14 M10.5 16 L17.5 16 M10.5 18 L16 18" stroke="#bbb" stroke-width="0.6"/></svg>
<div id="status" class="a">
<span style="left:2px;top:9.5px">154.6635,120.1887</span>
<span style="left:2px;top:29px">@4.6635,0.1887</span>
<div class="a" style="left:253.5px;top:4px;width:1px;height:40px;background:#555"></div>
<div class="a" style="left:254.5px;top:4px;width:1px;height:40px;background:#f4f4f4"></div>
<span style="left:256px;top:9.5px">195.8727&lt;38°</span>
<span style="left:256px;top:29px">@4.6673&lt;2°</span>
<div class="a" style="left:506.5px;top:21px;width:6px;height:6px;border-radius:3px;background:#c8c8c8"></div>
<span style="left:568.5px;top:17.5px;font-size:10.4px">Seleccionar entidad o región</span>
<svg style="left:716px;top:807px;position:fixed" width="20" height="31" viewBox="0 0 20 31"><rect x="1" y="0.6" width="17.6" height="29.4" rx="8.8" fill="#fff" stroke="#333" stroke-width="0.9"/><path d="M1 12.2 L18.6 12.2" stroke="#333" stroke-width="0.9"/><rect x="8.3" y="2.5" width="3" height="7" rx="1.5" fill="none" stroke="#333" stroke-width="0.8"/><path d="M9.8 0.6 L9.8 2.5 M9.8 9.5 L9.8 12.2" stroke="#333" stroke-width="0.8"/></svg>
<div class="a" style="left:940.5px;top:21px;width:6px;height:6px;border-radius:3px;background:#c8c8c8"></div>
<span style="left:949px;top:17.5px;font-size:10.3px">No hay entidades seleccionadas.</span>
<div class="a" style="left:1269.5px;top:21px;width:6px;height:6px;border-radius:3px;background:#c8c8c8"></div>
</div>

</body></html>
